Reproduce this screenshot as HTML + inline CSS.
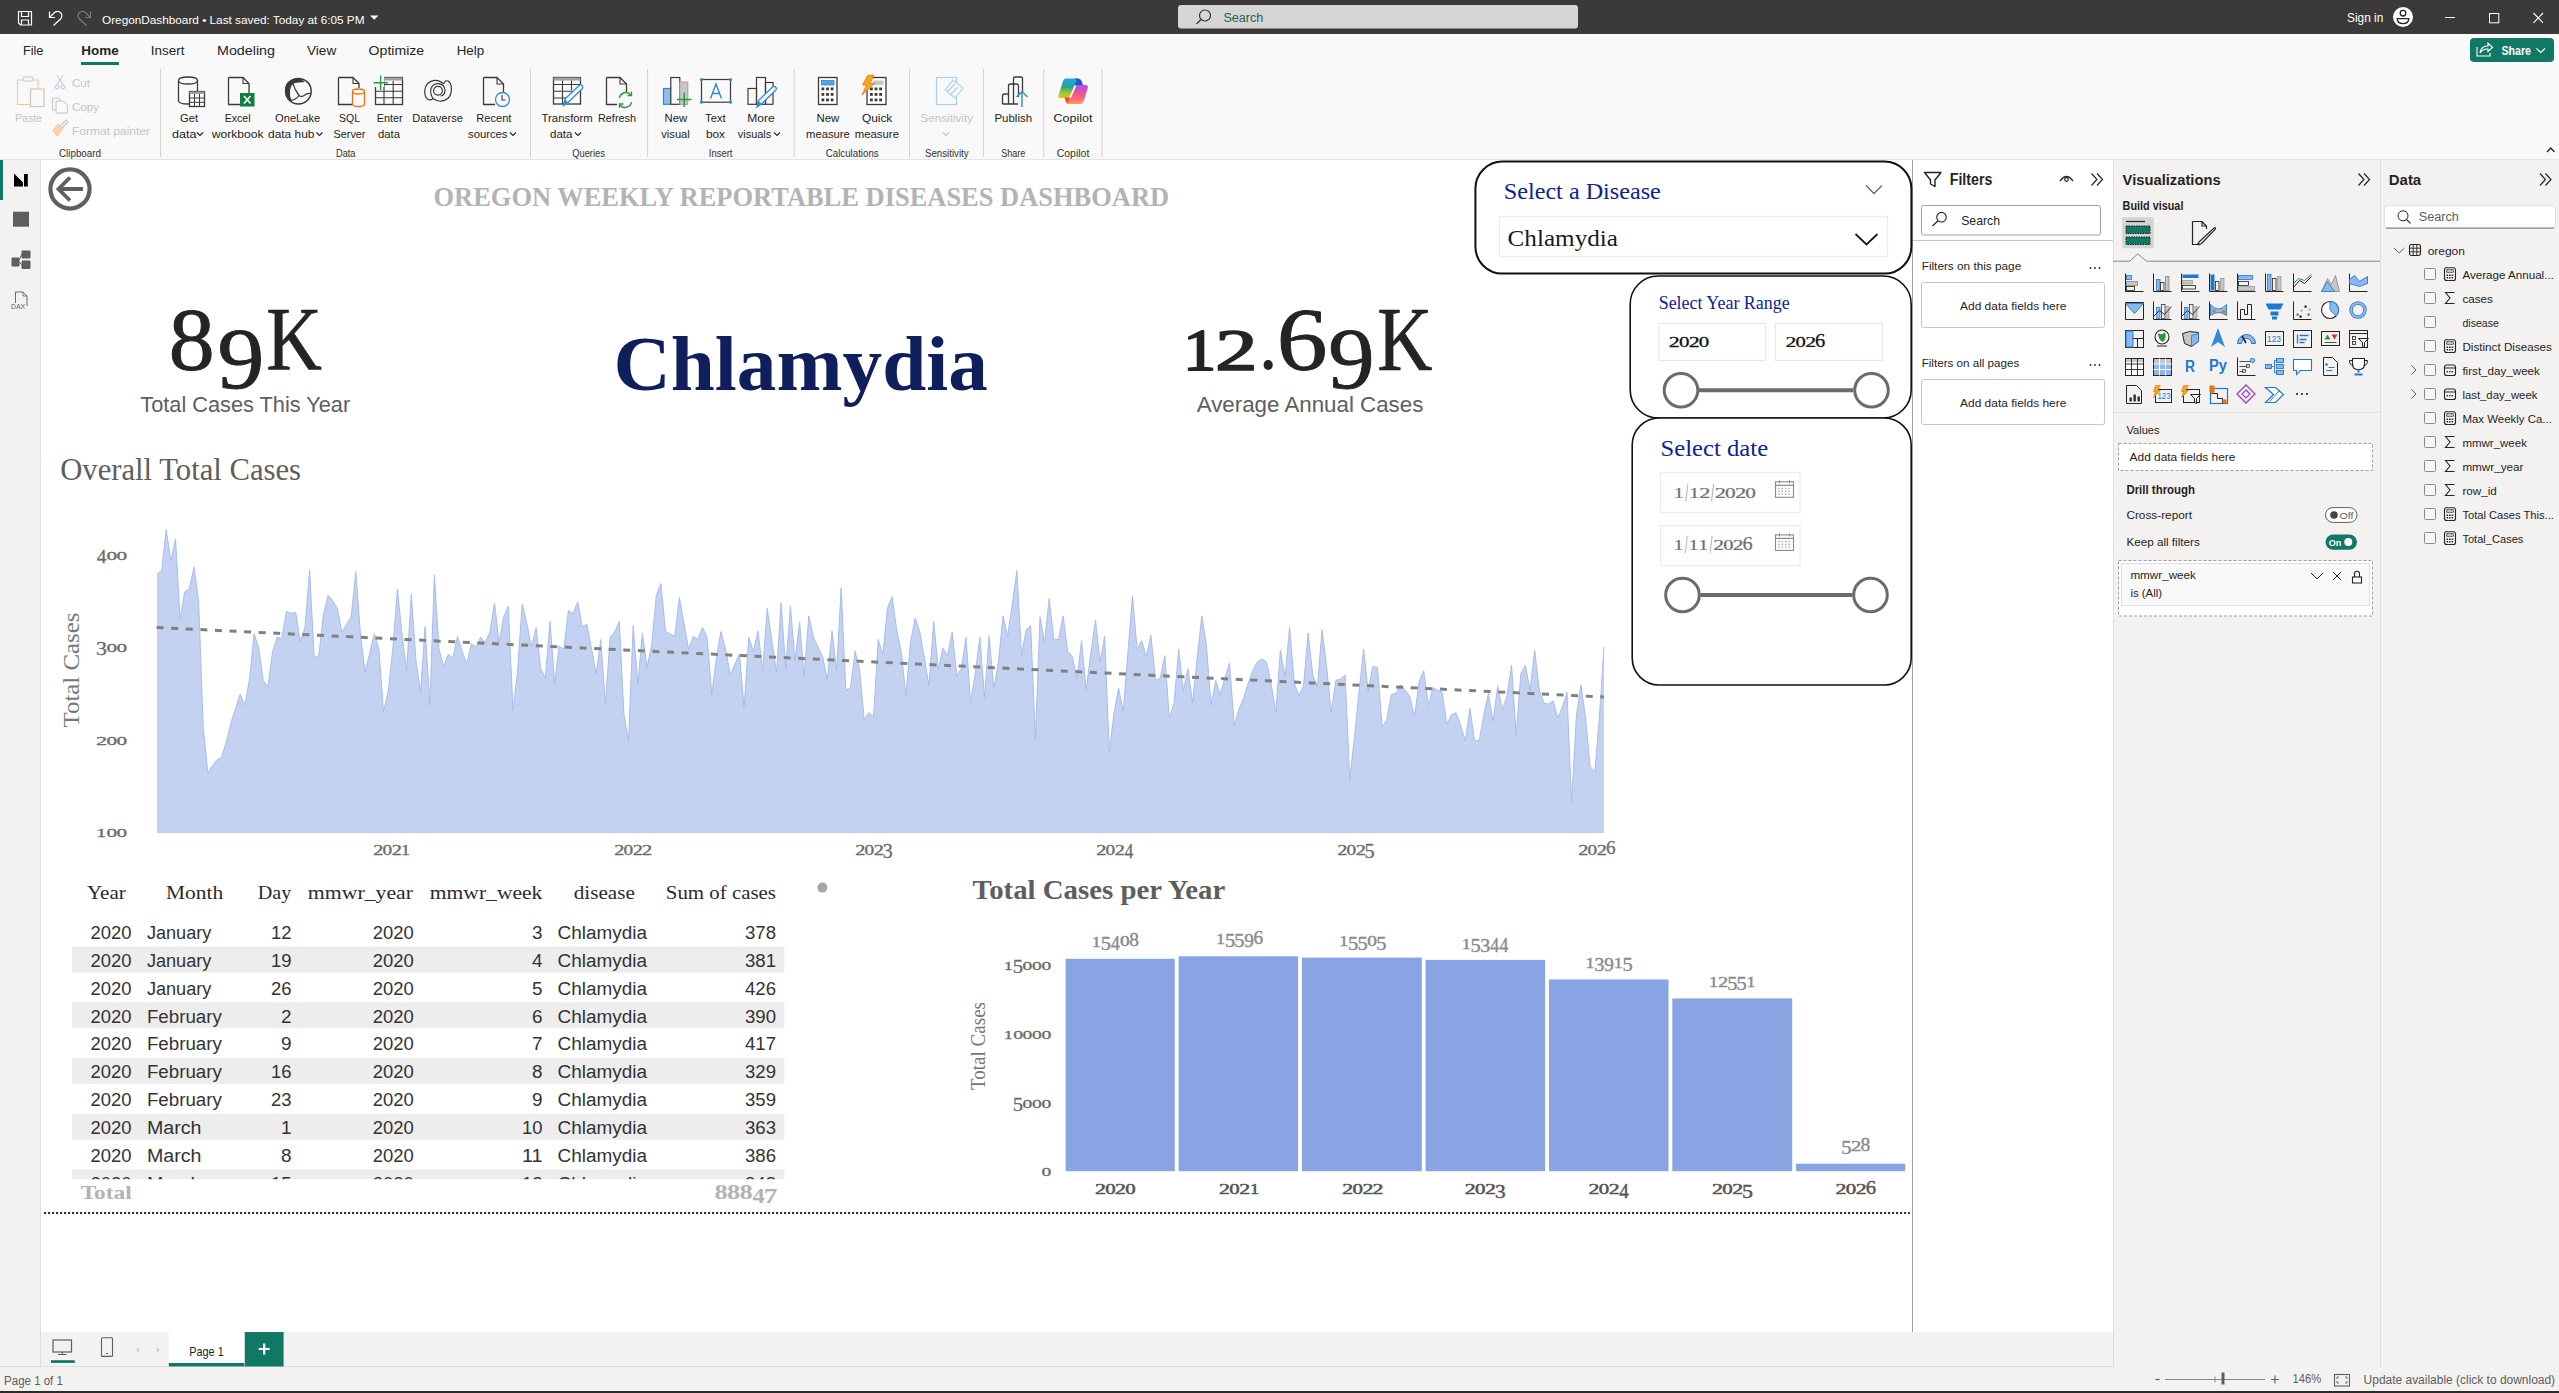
<!DOCTYPE html>
<html><head><meta charset="utf-8">
<style>
*{margin:0;padding:0}
html,body{width:2559px;height:1393px;overflow:hidden;background:#ffffff}
svg{display:block}
</style></head><body>
<svg width="2559" height="1393" viewBox="0 0 2559 1393" shape-rendering="geometricPrecision">
<rect x="0" y="0" width="2559" height="34" fill="#3b3a39"/>
<rect x="0" y="34" width="2559" height="126" fill="#f9f9f9"/>
<line x1="0" y1="159.5" x2="2559" y2="159.5" stroke="#e6e4e2" stroke-width="1"/>
<rect x="0" y="160" width="41" height="1207" fill="#f3f2f1"/>
<line x1="40.5" y1="160" x2="40.5" y2="1367" stroke="#e1dfdd" stroke-width="1"/>
<rect x="41" y="1332" width="2072" height="35" fill="#f3f2f1"/>
<rect x="0" y="1367" width="2559" height="24" fill="#f3f2f1"/>
<line x1="0" y1="1366.5" x2="2559" y2="1366.5" stroke="#e1dfdd" stroke-width="1"/>
<rect x="0" y="1391" width="2559" height="2" fill="#2b2b2b"/>
<path d="M18.5 11.5 H31.5 V25 H20.5 L18.5 23 Z" fill="none" stroke="#ffffff" stroke-width="1.2"/>
<path d="M21.5 11.5 V16.5 H28.5 V11.5" fill="none" stroke="#ffffff" stroke-width="1.2"/>
<path d="M21.5 25 V20 H28.5 V25" fill="none" stroke="#ffffff" stroke-width="1.2"/>
<path d="M49.5 11.5 V17.5 H55" fill="none" stroke="#ffffff" stroke-width="1.2"/>
<path d="M50 17 L54.5 12.5 Q58 10 61 13 Q63 16 60.5 19 L53.5 25.5" fill="none" stroke="#ffffff" stroke-width="1.2"/>
<path d="M90.5 11.5 V17.5 H85" fill="none" stroke="#7a7978" stroke-width="1.2"/>
<path d="M90 17 L85.5 12.5 Q82 10 79 13 Q77 16 79.5 19 L86.5 25.5" fill="none" stroke="#7a7978" stroke-width="1.2"/>
<text x="102.0" y="24.3" font-family='"Liberation Sans", sans-serif' font-size="11.6" fill="#ffffff" textLength="262.5" lengthAdjust="spacingAndGlyphs">OregonDashboard • Last saved: Today at 6:05 PM</text>
<path d="M370 15.5 L378.5 15.5 L374.25 19.8 Z" fill="#ffffff"/>
<rect x="1178" y="5" width="400" height="23.6" fill="#d6d6d6" rx="3"/>
<circle cx="1205" cy="15.5" r="5.5" fill="none" stroke="#323130" stroke-width="1.2"/>
<line x1="1201" y1="19.5" x2="1196.5" y2="24" stroke="#323130" stroke-width="1.3"/>
<text x="1223.4" y="21.8" font-family='"Liberation Sans", sans-serif' font-size="12.5" fill="#1e5f57" textLength="40.0" lengthAdjust="spacingAndGlyphs">Search</text>
<text x="2347.0" y="21.5" font-family='"Liberation Sans", sans-serif' font-size="12" fill="#ffffff" textLength="36.3" lengthAdjust="spacingAndGlyphs">Sign in</text>
<circle cx="2403" cy="17" r="10" fill="#ffffff"/>
<circle cx="2403" cy="13.2" r="2.8" fill="none" stroke="#252423" stroke-width="1.3"/>
<path d="M2397.2 18.6 H2408.8 Q2408.6 23.6 2403 23.6 Q2397.4 23.6 2397.2 18.6 Z" fill="none" stroke="#252423" stroke-width="1.3"/>
<line x1="2445" y1="17.5" x2="2455" y2="17.5" stroke="#ffffff" stroke-width="1"/>
<rect x="2489.5" y="13.5" width="9.3" height="9.3" fill="none" stroke="#ffffff" stroke-width="1"/>
<path d="M2533.5 13 L2543 22.8 M2543 13 L2533.5 22.8" fill="none" stroke="#ffffff" stroke-width="1.1"/>
<text x="23.0" y="55.0" font-family='"Liberation Sans", sans-serif' font-size="13.6" fill="#252423" textLength="20.4" lengthAdjust="spacingAndGlyphs">File</text>
<text x="81.3" y="55.0" font-family='"Liberation Sans", sans-serif' font-size="13.6" fill="#252423" font-weight="bold" textLength="37.5" lengthAdjust="spacingAndGlyphs">Home</text>
<text x="150.8" y="55.0" font-family='"Liberation Sans", sans-serif' font-size="13.6" fill="#252423" textLength="33.6" lengthAdjust="spacingAndGlyphs">Insert</text>
<text x="217.0" y="55.0" font-family='"Liberation Sans", sans-serif' font-size="13.6" fill="#252423" textLength="58.0" lengthAdjust="spacingAndGlyphs">Modeling</text>
<text x="307.0" y="55.0" font-family='"Liberation Sans", sans-serif' font-size="13.6" fill="#252423" textLength="29.2" lengthAdjust="spacingAndGlyphs">View</text>
<text x="368.6" y="55.0" font-family='"Liberation Sans", sans-serif' font-size="13.6" fill="#252423" textLength="55.6" lengthAdjust="spacingAndGlyphs">Optimize</text>
<text x="456.7" y="55.0" font-family='"Liberation Sans", sans-serif' font-size="13.6" fill="#252423" textLength="27.5" lengthAdjust="spacingAndGlyphs">Help</text>
<rect x="81" y="62" width="38" height="3" fill="#117865"/>
<rect x="2470" y="38" width="84" height="24" fill="#117865" rx="4"/>
<path d="M2477 47 V56 H2490 V53" fill="none" stroke="#ffffff" stroke-width="1.1"/>
<path d="M2480 53 Q2481 45.5 2488 46 V43 L2492.5 47.5 L2488 51.5 V49 Q2483 48.5 2480 53 Z" fill="none" stroke="#ffffff" stroke-width="1.1"/>
<text x="2501.4" y="54.6" font-family='"Liberation Sans", sans-serif' font-size="12.3" fill="#ffffff" font-weight="bold" textLength="29.6" lengthAdjust="spacingAndGlyphs">Share</text>
<path d="M2536.5 48.5 L2540.75 52.5 L2545 48.5" fill="none" stroke="#ffffff" stroke-width="1.1"/>
<path d="M2547 152 L2550.75 148 L2554.5 152" fill="none" stroke="#252423" stroke-width="1.3"/>
<line x1="160.6" y1="69" x2="160.6" y2="157" stroke="#d2d0ce" stroke-width="1"/>
<line x1="530.5" y1="69" x2="530.5" y2="157" stroke="#d2d0ce" stroke-width="1"/>
<line x1="647.6" y1="69" x2="647.6" y2="157" stroke="#d2d0ce" stroke-width="1"/>
<line x1="794.2" y1="69" x2="794.2" y2="157" stroke="#d2d0ce" stroke-width="1"/>
<line x1="909.5" y1="69" x2="909.5" y2="157" stroke="#d2d0ce" stroke-width="1"/>
<line x1="983.4" y1="69" x2="983.4" y2="157" stroke="#d2d0ce" stroke-width="1"/>
<line x1="1043.8" y1="69" x2="1043.8" y2="157" stroke="#d2d0ce" stroke-width="1"/>
<line x1="1102" y1="69" x2="1102" y2="157" stroke="#d2d0ce" stroke-width="1"/>
<text x="15.0" y="121.6" font-family='"Liberation Sans", sans-serif' font-size="11.6" fill="#c6c4c2" textLength="27.0" lengthAdjust="spacingAndGlyphs">Paste</text>
<text x="72.0" y="86.6" font-family='"Liberation Sans", sans-serif' font-size="11.6" fill="#c6c4c2" textLength="18.0" lengthAdjust="spacingAndGlyphs">Cut</text>
<text x="72.0" y="110.7" font-family='"Liberation Sans", sans-serif' font-size="11.6" fill="#c6c4c2" textLength="27.0" lengthAdjust="spacingAndGlyphs">Copy</text>
<text x="72.0" y="134.7" font-family='"Liberation Sans", sans-serif' font-size="11.6" fill="#c6c4c2" textLength="78.0" lengthAdjust="spacingAndGlyphs">Format painter</text>
<text x="180.0" y="121.8" font-family='"Liberation Sans", sans-serif' font-size="11.6" fill="#252423" textLength="18.0" lengthAdjust="spacingAndGlyphs">Get</text>
<text x="172.0" y="137.6" font-family='"Liberation Sans", sans-serif' font-size="11.6" fill="#252423" textLength="24.5" lengthAdjust="spacingAndGlyphs">data</text>
<text x="224.8" y="121.8" font-family='"Liberation Sans", sans-serif' font-size="11.6" fill="#252423" textLength="25.7" lengthAdjust="spacingAndGlyphs">Excel</text>
<text x="211.7" y="137.6" font-family='"Liberation Sans", sans-serif' font-size="11.6" fill="#252423" textLength="52.0" lengthAdjust="spacingAndGlyphs">workbook</text>
<text x="275.0" y="121.8" font-family='"Liberation Sans", sans-serif' font-size="11.6" fill="#252423" textLength="45.3" lengthAdjust="spacingAndGlyphs">OneLake</text>
<text x="268.0" y="137.6" font-family='"Liberation Sans", sans-serif' font-size="11.6" fill="#252423" textLength="46.5" lengthAdjust="spacingAndGlyphs">data hub</text>
<text x="339.0" y="121.8" font-family='"Liberation Sans", sans-serif' font-size="11.6" fill="#252423" textLength="21.0" lengthAdjust="spacingAndGlyphs">SQL</text>
<text x="333.5" y="137.6" font-family='"Liberation Sans", sans-serif' font-size="11.6" fill="#252423" textLength="32.0" lengthAdjust="spacingAndGlyphs">Server</text>
<text x="376.7" y="121.8" font-family='"Liberation Sans", sans-serif' font-size="11.6" fill="#252423" textLength="25.9" lengthAdjust="spacingAndGlyphs">Enter</text>
<text x="378.0" y="137.6" font-family='"Liberation Sans", sans-serif' font-size="11.6" fill="#252423" textLength="22.0" lengthAdjust="spacingAndGlyphs">data</text>
<text x="412.3" y="121.8" font-family='"Liberation Sans", sans-serif' font-size="11.6" fill="#252423" textLength="50.7" lengthAdjust="spacingAndGlyphs">Dataverse</text>
<text x="476.3" y="121.8" font-family='"Liberation Sans", sans-serif' font-size="11.6" fill="#252423" textLength="35.1" lengthAdjust="spacingAndGlyphs">Recent</text>
<text x="468.0" y="137.6" font-family='"Liberation Sans", sans-serif' font-size="11.6" fill="#252423" textLength="39.5" lengthAdjust="spacingAndGlyphs">sources</text>
<text x="541.6" y="121.8" font-family='"Liberation Sans", sans-serif' font-size="11.6" fill="#252423" textLength="51.2" lengthAdjust="spacingAndGlyphs">Transform</text>
<text x="550.0" y="137.6" font-family='"Liberation Sans", sans-serif' font-size="11.6" fill="#252423" textLength="22.5" lengthAdjust="spacingAndGlyphs">data</text>
<text x="598.0" y="121.8" font-family='"Liberation Sans", sans-serif' font-size="11.6" fill="#252423" textLength="38.0" lengthAdjust="spacingAndGlyphs">Refresh</text>
<text x="664.5" y="121.8" font-family='"Liberation Sans", sans-serif' font-size="11.6" fill="#252423" textLength="22.7" lengthAdjust="spacingAndGlyphs">New</text>
<text x="661.3" y="137.6" font-family='"Liberation Sans", sans-serif' font-size="11.6" fill="#252423" textLength="28.5" lengthAdjust="spacingAndGlyphs">visual</text>
<text x="705.0" y="121.8" font-family='"Liberation Sans", sans-serif' font-size="11.6" fill="#252423" textLength="20.7" lengthAdjust="spacingAndGlyphs">Text</text>
<text x="706.0" y="137.6" font-family='"Liberation Sans", sans-serif' font-size="11.6" fill="#252423" textLength="19.0" lengthAdjust="spacingAndGlyphs">box</text>
<text x="747.3" y="121.8" font-family='"Liberation Sans", sans-serif' font-size="11.6" fill="#252423" textLength="27.4" lengthAdjust="spacingAndGlyphs">More</text>
<text x="737.8" y="137.6" font-family='"Liberation Sans", sans-serif' font-size="11.6" fill="#252423" textLength="33.5" lengthAdjust="spacingAndGlyphs">visuals</text>
<text x="816.5" y="121.8" font-family='"Liberation Sans", sans-serif' font-size="11.6" fill="#252423" textLength="22.8" lengthAdjust="spacingAndGlyphs">New</text>
<text x="806.0" y="137.6" font-family='"Liberation Sans", sans-serif' font-size="11.6" fill="#252423" textLength="43.8" lengthAdjust="spacingAndGlyphs">measure</text>
<text x="862.0" y="121.8" font-family='"Liberation Sans", sans-serif' font-size="11.6" fill="#252423" textLength="30.3" lengthAdjust="spacingAndGlyphs">Quick</text>
<text x="854.7" y="137.6" font-family='"Liberation Sans", sans-serif' font-size="11.6" fill="#252423" textLength="44.3" lengthAdjust="spacingAndGlyphs">measure</text>
<text x="994.5" y="121.8" font-family='"Liberation Sans", sans-serif' font-size="11.6" fill="#252423" textLength="37.5" lengthAdjust="spacingAndGlyphs">Publish</text>
<text x="1053.6" y="121.8" font-family='"Liberation Sans", sans-serif' font-size="11.6" fill="#252423" textLength="38.8" lengthAdjust="spacingAndGlyphs">Copilot</text>
<text x="920.6" y="121.8" font-family='"Liberation Sans", sans-serif' font-size="11.6" fill="#c6c4c2" textLength="52.4" lengthAdjust="spacingAndGlyphs">Sensitivity</text>
<path d="M197 132.5 L200 135.5 L203 132.5" fill="none" stroke="#252423" stroke-width="1.1"/>
<path d="M316.5 132.5 L319.5 135.5 L322.5 132.5" fill="none" stroke="#252423" stroke-width="1.1"/>
<path d="M510 132.5 L513 135.5 L516 132.5" fill="none" stroke="#252423" stroke-width="1.1"/>
<path d="M575 132.5 L578 135.5 L581 132.5" fill="none" stroke="#252423" stroke-width="1.1"/>
<path d="M774 132.5 L777 135.5 L780 132.5" fill="none" stroke="#252423" stroke-width="1.1"/>
<path d="M943 132.5 L946 135.5 L949 132.5" fill="none" stroke="#c6c4c2" stroke-width="1.1"/>
<text x="59.0" y="156.5" font-family='"Liberation Sans", sans-serif' font-size="10.8" fill="#323130" textLength="42.0" lengthAdjust="spacingAndGlyphs">Clipboard</text>
<text x="336.0" y="156.5" font-family='"Liberation Sans", sans-serif' font-size="10.8" fill="#323130" textLength="19.4" lengthAdjust="spacingAndGlyphs">Data</text>
<text x="572.2" y="156.5" font-family='"Liberation Sans", sans-serif' font-size="10.8" fill="#323130" textLength="32.7" lengthAdjust="spacingAndGlyphs">Queries</text>
<text x="708.8" y="156.5" font-family='"Liberation Sans", sans-serif' font-size="10.8" fill="#323130" textLength="23.7" lengthAdjust="spacingAndGlyphs">Insert</text>
<text x="825.8" y="156.5" font-family='"Liberation Sans", sans-serif' font-size="10.8" fill="#323130" textLength="52.9" lengthAdjust="spacingAndGlyphs">Calculations</text>
<text x="925.0" y="156.5" font-family='"Liberation Sans", sans-serif' font-size="10.8" fill="#323130" textLength="43.6" lengthAdjust="spacingAndGlyphs">Sensitivity</text>
<text x="1001.3" y="156.5" font-family='"Liberation Sans", sans-serif' font-size="10.8" fill="#323130" textLength="24.0" lengthAdjust="spacingAndGlyphs">Share</text>
<text x="1056.7" y="156.5" font-family='"Liberation Sans", sans-serif' font-size="10.8" fill="#323130" textLength="32.6" lengthAdjust="spacingAndGlyphs">Copilot</text>
<path d="M17.5 80 H38 V104.5 H17.5 Z" fill="none" stroke="#f5c89a" stroke-width="1.2"/>
<rect x="23" y="77" width="10" height="4" fill="#f9f9f9" stroke="#c8c6c4" stroke-width="1" rx="1"/>
<rect x="30.5" y="89" width="13.5" height="17.5" fill="#f9f9f9" stroke="#c8c6c4" stroke-width="1.2"/>
<path d="M57 75 L63 85 M63 75 L57 85" fill="none" stroke="#c8c6c4" stroke-width="1"/>
<circle cx="57" cy="87" r="2" fill="none" stroke="#a9c9ea" stroke-width="1"/>
<circle cx="63" cy="87" r="2" fill="none" stroke="#a9c9ea" stroke-width="1"/>
<path d="M52.5 98 H59 L60 100 V110 H52.5 Z" fill="none" stroke="#c8c6c4" stroke-width="1"/>
<path d="M56 101 H63 L67.5 105 V113 H56 Z" fill="#f9f9f9" stroke="#c8c6c4" stroke-width="1"/>
<path d="M53 131 L58 124 L63 129 L57 136 Z" fill="#f8d3ad" stroke="#f5c89a" stroke-width="1"/>
<path d="M60 126 L66 120 L68 122 L62 128" fill="none" stroke="#c8c6c4" stroke-width="1.2"/>
<path d="M178.5 80.5 V100.5 Q178.5 104 188 104 Q190 104 189.5 104" fill="none" stroke="#3b3a39" stroke-width="1.3"/>
<path d="M178.5 80.5 Q178.5 77 188 77 Q197.5 77 197.5 80.5 V91" fill="none" stroke="#3b3a39" stroke-width="1.3"/>
<path d="M178.5 80.5 Q178.5 84 188 84 Q197.5 84 197.5 80.5" fill="none" stroke="#3b3a39" stroke-width="1.3"/>
<rect x="189.5" y="91.5" width="15" height="15" fill="#f9f9f9" stroke="#3b3a39" stroke-width="1.3"/>
<rect x="189.5" y="91.5" width="15" height="2.5" fill="#a19f9d"/>
<path d="M189.5 98 H204.5 M189.5 102.3 H204.5 M194.5 94 V106.5 M199.5 94 V106.5" fill="none" stroke="#3b3a39" stroke-width="1"/>
<path d="M228.5 77.5 H243 L249 83.5 V93 M240 104.5 H228.5 V77.5" fill="none" stroke="#3b3a39" stroke-width="1.3"/>
<path d="M243 77.5 V83.5 H249" fill="none" stroke="#3b3a39" stroke-width="1.1"/>
<rect x="240" y="93" width="14.5" height="13.5" fill="#107c41"/>
<path d="M244 96 L250.5 103.5 M250.5 96 L244 103.5" fill="none" stroke="#ffffff" stroke-width="1.6"/>
<circle cx="298.4" cy="91.2" r="12.8" fill="none" stroke="#3b3a39" stroke-width="1.5"/>
<path d="M297 78.4 Q290.5 78.6 287 83 Q284.3 87 285.4 93.5 Q286.5 99 291.5 100.5 Q289.5 96 290 91 Q290.6 86 293 84 Q296 81.8 304.5 82.2 Q302.5 78.4 297 78.4 Z" fill="#3b3a39"/>
<path d="M292.5 82.6 Q295 90 299 95.5 Q301.5 97.5 304 95.5 Q307 93 311 93.5" fill="none" stroke="#3b3a39" stroke-width="1.3"/>
<path d="M290 100.5 Q296 100 299 95.5" fill="none" stroke="#3b3a39" stroke-width="1.3"/>
<path d="M338.5 77.5 H353 L359 83.5 V88 M352 104.5 H338.5 V77.5" fill="none" stroke="#3b3a39" stroke-width="1.3"/>
<path d="M353 77.5 V83.5 H359" fill="none" stroke="#3b3a39" stroke-width="1.1"/>
<path d="M352.5 91.5 V104 Q352.5 106.5 358.5 106.5 Q364.5 106.5 364.5 104 V91.5" fill="#f9f9f9" stroke="#e8730c" stroke-width="1.3"/>
<ellipse cx="358.5" cy="91.5" rx="6" ry="2.5" fill="#f9f9f9" stroke="#e8730c" stroke-width="1.3"/>
<rect x="375.5" y="77.5" width="27" height="27" fill="none" stroke="#3b3a39" stroke-width="1.3"/>
<rect x="384" y="77.5" width="18.5" height="3" fill="#a19f9d"/>
<path d="M375.5 84.5 H402.5 M375.5 91.2 H402.5 M375.5 97.8 H402.5 M384 81 V104.5 M393.2 81 V104.5" fill="none" stroke="#3b3a39" stroke-width="1.1"/>
<rect x="372" y="75" width="12" height="12" fill="#f9f9f9"/>
<path d="M380.6 75.5 V90 M373.5 82.7 H388" fill="none" stroke="#2a9a3d" stroke-width="1.4"/>
<circle cx="438" cy="90.8" r="4.4" fill="none" stroke="#3b3a39" stroke-width="1.2"/>
<path d="M443.5 84 Q440 80 434.5 80.3 Q426 81.5 424.8 90 Q424.2 97 428 99.5 Q431 100.8 433 98.5" fill="none" stroke="#3b3a39" stroke-width="1.2"/>
<path d="M433 98.5 Q429.5 93 431.2 88 Q433.5 83.3 438.5 83.6 Q444.5 84.5 445 90 Q445 95.5 440.5 96" fill="none" stroke="#3b3a39" stroke-width="1.2"/>
<path d="M433 98.5 Q437 101.5 441 101.2 Q449 100.5 451 93 Q452.5 84.5 448.5 81.2 Q445.5 79.5 443.5 84" fill="none" stroke="#3b3a39" stroke-width="1.2"/>
<path d="M483.5 77.5 H497 L503.5 84 V92 M495 104.5 H483.5 V77.5" fill="none" stroke="#3b3a39" stroke-width="1.3"/>
<path d="M497 77.5 V84 H503.5" fill="none" stroke="#3b3a39" stroke-width="1.1"/>
<circle cx="502.5" cy="99.5" r="7" fill="#f9f9f9" stroke="#2f8ad8" stroke-width="1.3"/>
<path d="M502 95 V100 H505.5" fill="none" stroke="#3b3a39" stroke-width="1.1"/>
<rect x="553.5" y="77.5" width="27" height="26.5" fill="none" stroke="#3b3a39" stroke-width="1.3"/>
<rect x="553.5" y="77.5" width="27" height="3" fill="#a19f9d"/>
<path d="M553.5 84.5 H580.5 M553.5 91.3 H580.5 M553.5 98 H570 M562.5 80.5 V104 M571.5 80.5 V90" fill="none" stroke="#3b3a39" stroke-width="1.1"/>
<path d="M563.5 105.5 L565 99 L579 85.5 Q581 84 582.5 86 Q583.5 87.5 582 89 L568 102.5 Z" fill="#f9f9f9" stroke="#2f8ad8" stroke-width="1.3"/>
<path d="M563.5 105.5 L565 99 L568 102.5 Z" fill="#2f8ad8"/>
<path d="M606.5 77.5 H620 L626.5 84 V92 M617 104.5 H606.5 V77.5" fill="none" stroke="#3b3a39" stroke-width="1.3"/>
<path d="M620 77.5 V84 H626.5" fill="none" stroke="#3b3a39" stroke-width="1.1"/>
<path d="M619.5 98 A6.5 6.5 0 0 1 631 95 M631.5 102 A6.5 6.5 0 0 1 620 105" fill="none" stroke="#2a9a3d" stroke-width="1.5"/>
<path d="M631.5 91.5 V95.5 H627.5 M619.5 108 V104 H623.5" fill="none" stroke="#2a9a3d" stroke-width="1.3"/>
<rect x="663.5" y="88.5" width="7.3" height="15.8" fill="#8cbcf0" stroke="#2f8ad8" stroke-width="1.2"/>
<rect x="670.8" y="77.5" width="9" height="26.8" fill="#f9f9f9" stroke="#3b3a39" stroke-width="1.2"/>
<rect x="679.8" y="82" width="8" height="22.3" fill="#c8c6c4" stroke="#a19f9d" stroke-width="1"/>
<path d="M684.2 92.5 V107 M677 99.5 H691.5" fill="none" stroke="#2a9a3d" stroke-width="1.5"/>
<rect x="701.5" y="79.5" width="29" height="22.7" fill="none" stroke="#3b3a39" stroke-width="1.2"/>
<circle cx="701.5" cy="79.5" r="1.6" fill="#2f8ad8"/>
<circle cx="730.5" cy="79.5" r="1.6" fill="#2f8ad8"/>
<circle cx="701.5" cy="102.2" r="1.6" fill="#2f8ad8"/>
<circle cx="730.5" cy="102.2" r="1.6" fill="#2f8ad8"/>
<path d="M710.5 98.5 L716 84 L721.5 98.5 M712.5 93.5 H719.5" fill="none" stroke="#2f8ad8" stroke-width="1.4"/>
<rect x="748" y="88.5" width="8.5" height="15.8" fill="none" stroke="#3b3a39" stroke-width="1.2"/>
<rect x="756.5" y="77.5" width="9" height="26.8" fill="none" stroke="#3b3a39" stroke-width="1.2"/>
<rect x="765.5" y="82.5" width="7.5" height="21.8" fill="none" stroke="#3b3a39" stroke-width="1.2"/>
<path d="M757 107 L758.5 100.5 L772.5 87 Q774.5 85.5 776 87.5 Q777 89 775.5 90.5 L761.5 104 Z" fill="#f9f9f9" stroke="#2f8ad8" stroke-width="1.3"/>
<path d="M757 107 L758.5 100.5 L761.5 104 Z" fill="#2f8ad8"/>
<rect x="818.5" y="77.5" width="18.5" height="27" fill="#ffffff" stroke="#3b3a39" stroke-width="1.3"/>
<rect x="821.5" y="80.5" width="12.5" height="4.5" fill="#5aa0e6" stroke="#2f8ad8" stroke-width="0.8"/>
<rect x="821.5" y="87.5" width="2.8" height="2.8" fill="#3b3a39"/>
<rect x="826.1" y="87.5" width="2.8" height="2.8" fill="#3b3a39"/>
<rect x="830.7" y="87.5" width="2.8" height="2.8" fill="#3b3a39"/>
<rect x="821.5" y="93.0" width="2.8" height="2.8" fill="#3b3a39"/>
<rect x="826.1" y="93.0" width="2.8" height="2.8" fill="#3b3a39"/>
<rect x="830.7" y="93.0" width="2.8" height="2.8" fill="#3b3a39"/>
<rect x="821.5" y="98.5" width="2.8" height="2.8" fill="#3b3a39"/>
<rect x="826.1" y="98.5" width="2.8" height="2.8" fill="#3b3a39"/>
<rect x="830.7" y="98.5" width="2.8" height="2.8" fill="#3b3a39"/>
<rect x="867" y="77.5" width="19" height="27" fill="#ffffff" stroke="#3b3a39" stroke-width="1.3"/>
<rect x="873" y="80.5" width="10.5" height="4.5" fill="#c8c6c4"/>
<rect x="870.0" y="87.5" width="2.8" height="2.8" fill="#3b3a39"/>
<rect x="874.6" y="87.5" width="2.8" height="2.8" fill="#3b3a39"/>
<rect x="879.2" y="87.5" width="2.8" height="2.8" fill="#3b3a39"/>
<rect x="870.0" y="93.0" width="2.8" height="2.8" fill="#3b3a39"/>
<rect x="874.6" y="93.0" width="2.8" height="2.8" fill="#3b3a39"/>
<rect x="879.2" y="93.0" width="2.8" height="2.8" fill="#3b3a39"/>
<rect x="870.0" y="98.5" width="2.8" height="2.8" fill="#3b3a39"/>
<rect x="874.6" y="98.5" width="2.8" height="2.8" fill="#3b3a39"/>
<rect x="879.2" y="98.5" width="2.8" height="2.8" fill="#3b3a39"/>
<path d="M868 75.2 H874 L870 83.5 H874.5 L862 95 L866.5 85 H862.5 Z" fill="#f7a823" stroke="#e8730c" stroke-width="0.8"/>
<rect x="936.5" y="77.5" width="20" height="27" fill="none" stroke="#a9d0ee" stroke-width="1.2"/>
<path d="M945 90 L953 80 L963 88 L955 98 Z" fill="#f9f9f9" stroke="#a9d0ee" stroke-width="1.2"/>
<path d="M947 92 L955 84 M950 95 L958 87" fill="none" stroke="#a9d0ee" stroke-width="1.2"/>
<path d="M1002.5 104 V96 Q1002.5 94 1004.5 94 H1008.5 V86 Q1008.5 84 1010.5 84 H1013.5 V78 Q1013.5 77 1015 77 H1021 Q1022.5 77 1022.5 78 V92" fill="none" stroke="#3b3a39" stroke-width="1.3"/>
<path d="M1002.5 104 H1018 M1008.5 94 V104 M1013.5 84 V104 M1013.5 84 H1017 Q1018.5 84 1018.5 86 V97" fill="none" stroke="#3b3a39" stroke-width="1.3"/>
<path d="M1022 107 V92 M1016.5 97 L1022 91.5 L1027.5 97" fill="none" stroke="#2f8ad8" stroke-width="1.4"/>
<defs><linearGradient id="cpA" x1="0" y1="0" x2="0" y2="1"><stop offset="0" stop-color="#1ea7f0"/><stop offset="0.45" stop-color="#2aa58a"/><stop offset="0.7" stop-color="#8cc63f"/><stop offset="1" stop-color="#f5c400"/></linearGradient><linearGradient id="cpB" x1="0" y1="0" x2="0" y2="1"><stop offset="0" stop-color="#b14ef0"/><stop offset="0.4" stop-color="#e9509b"/><stop offset="0.7" stop-color="#ff6577"/><stop offset="1" stop-color="#ff9d5a"/></linearGradient></defs>
<path d="M1065.5 78.5 H1077.5 Q1080.5 78.5 1081.5 81 L1083 85.5 H1074.5 L1070 96.5 Q1069.5 98 1067.5 98 H1060.5 Q1057.8 98 1058.5 95.5 L1063 81 Q1063.8 78.5 1065.5 78.5 Z" fill="url(#cpA)"/>
<path d="M1075 78.5 H1077.5 Q1080.5 78.5 1081.5 81 L1083 85.5 H1074.5 L1076.5 80.5 Z" fill="#1f47d6" opacity="0.85"/>
<path d="M1076 85 H1085.5 Q1088.5 85 1087.8 88 L1083.5 101.5 Q1082.8 104 1080 104 H1068.5 Q1066.5 104 1065.8 101.8 L1064.5 97.5 H1069.8 L1074.5 86.5 Q1075 85 1076 85 Z" fill="url(#cpB)"/>
<path d="M1064.5 97.5 H1070 L1068.8 100.5 Q1068 104 1066.5 103 Z" fill="#f0502a" opacity="0.9"/>
<line x1="1075.5" y1="85.5" x2="1070" y2="98" stroke="#ffffff" stroke-width="1.6"/>
<rect x="0" y="160" width="3" height="40" fill="#117865"/>
<path d="M14 173.5 L23 182.5 V186.5 H14 Z" fill="#000000"/>
<rect x="24" y="174" width="3.8" height="12.5" fill="#000000"/>
<rect x="13" y="211.7" width="16" height="15" fill="#605e5c"/>
<path d="M12 258 H19 V266 H12 Z M22 251 H30 V258 H22 Z M22 261 H30 V268.5 H22 Z M19 260 L22 254 M19 262 L22 265" fill="#605e5c" stroke="#605e5c" stroke-width="1"/>
<path d="M15.5 303 V292 H23 L27 296 V306" fill="none" stroke="#605e5c" stroke-width="0.9"/>
<path d="M23 292 V296 H27" fill="none" stroke="#605e5c" stroke-width="0.8"/>
<text x="11.0" y="308.5" font-family='"Liberation Sans", sans-serif' font-size="6.5" fill="#605e5c" textLength="14.0" lengthAdjust="spacingAndGlyphs">DAX</text>
<rect x="53" y="1340" width="18.5" height="12" fill="none" stroke="#605e5c" stroke-width="1.2"/>
<path d="M62.3 1352 V1354.5 M58 1354.5 H66.5" fill="none" stroke="#605e5c" stroke-width="1.2"/>
<rect x="51" y="1360.2" width="23.8" height="2.7" fill="#117865"/>
<rect x="101.5" y="1337.8" width="11" height="18.6" fill="none" stroke="#605e5c" stroke-width="1.1" rx="1"/>
<line x1="106" y1="1353.5" x2="108" y2="1353.5" stroke="#605e5c" stroke-width="1"/>
<path d="M139 1347 L135.5 1350 L139 1353 Z" fill="#d2d0ce"/>
<path d="M156.5 1347 L160 1350 L156.5 1353 Z" fill="#d2d0ce"/>
<rect x="168.8" y="1332" width="75.5" height="34.5" fill="#ffffff"/>
<rect x="168.8" y="1363" width="75.5" height="3.5" fill="#117865"/>
<text x="189.3" y="1355.5" font-family='"Liberation Sans", sans-serif' font-size="12.4" fill="#252423" textLength="34.4" lengthAdjust="spacingAndGlyphs">Page 1</text>
<rect x="244.8" y="1332" width="38.8" height="34.5" fill="#117865"/>
<path d="M264.2 1343.5 V1354.5 M258.7 1349 H269.7" fill="none" stroke="#ffffff" stroke-width="2.2"/>
<text x="4.1" y="1384.8" font-family='"Liberation Sans", sans-serif' font-size="12" fill="#605e5c" textLength="58.8" lengthAdjust="spacingAndGlyphs">Page 1 of 1</text>
<line x1="2155.5" y1="1379.5" x2="2159.5" y2="1379.5" stroke="#605e5c" stroke-width="1.2"/>
<line x1="2165" y1="1379.5" x2="2265" y2="1379.5" stroke="#8a8886" stroke-width="1"/>
<line x1="2215" y1="1376.5" x2="2215" y2="1382.5" stroke="#8a8886" stroke-width="1"/>
<rect x="2221.5" y="1372.5" width="3" height="12" fill="#605e5c"/>
<path d="M2271 1379.5 H2279 M2275 1375.5 V1383.5" fill="none" stroke="#605e5c" stroke-width="1.1"/>
<text x="2292.5" y="1383.4" font-family='"Liberation Sans", sans-serif' font-size="12" fill="#605e5c" textLength="28.7" lengthAdjust="spacingAndGlyphs">146%</text>
<rect x="2334.5" y="1374.5" width="15" height="11.5" fill="none" stroke="#605e5c" stroke-width="1.1"/>
<path d="M2337 1377 V1379 M2337 1377 H2339 M2347 1377 H2345 M2347 1377 V1379 M2337 1383 V1381 M2337 1383 H2339 M2347 1383 H2345 M2347 1383 V1381" fill="none" stroke="#605e5c" stroke-width="0.9"/>
<text x="2363.6" y="1383.5" font-family='"Liberation Sans", sans-serif' font-size="12" fill="#605e5c" textLength="191.5" lengthAdjust="spacingAndGlyphs">Update available (click to download)</text>
<line x1="1912.5" y1="160" x2="1912.5" y2="1332" stroke="#a19f9d" stroke-width="1"/>
<circle cx="70" cy="189" r="19.6" fill="none" stroke="#5f5f5f" stroke-width="4.2"/>
<path d="M83 189 H58.5 M70 177.5 L58.5 189 L70 200.5" fill="none" stroke="#5f5f5f" stroke-width="3.8"/>
<text transform="translate(433.54 205.90) scale(0.9629 1)" font-family='"Liberation Serif", serif' font-size="27.48" fill="#b3b3b3" font-weight="bold">OREGON WEEKLY REPORTABLE DISEASES DASHBOARD</text>
<text transform="translate(168.71 369.17) scale(1.0393 1)" font-family='"Liberation Serif", serif' font-size="88.30" fill="#252423" stroke="#252423" stroke-width="0.9" stroke-linejoin="round">8</text>
<text transform="translate(217.41 388.38) scale(1.0701 1)" font-family='"Liberation Serif", serif' font-size="87.43" fill="#252423" stroke="#252423" stroke-width="0.9" stroke-linejoin="round">9</text>
<text transform="translate(266.13 370.15) scale(0.8443 1)" font-family='"Liberation Serif", serif' font-size="91.30" fill="#252423" stroke="#252423" stroke-width="0.7" stroke-linejoin="round">K</text>
<text transform="translate(140.31 411.80) scale(0.9658 1)" font-family='"Liberation Sans", sans-serif' font-size="22.53" fill="#605e5c">Total Cases This Year</text>
<text transform="translate(613.43 389.50) scale(1.0085 1)" font-family='"Liberation Serif", serif' font-size="78.63" fill="#0f1f5c" font-weight="bold">Chlamydia</text>
<text transform="translate(1183.09 369.60) scale(1.1321 1)" font-family='"Liberation Serif", serif' font-size="58.64" fill="#252423" stroke="#252423" stroke-width="1.8" stroke-linejoin="round">1</text>
<text transform="translate(1215.37 369.65) scale(1.4381 1)" font-family='"Liberation Serif", serif' font-size="58.57" fill="#252423" stroke="#252423" stroke-width="1.7" stroke-linejoin="round">2</text>
<text transform="translate(1258.46 369.22) scale(0.9106 1)" font-family='"Liberation Serif", serif' font-size="85.11" fill="#252423">.</text>
<text transform="translate(1276.64 369.16) scale(1.1417 1)" font-family='"Liberation Serif", serif' font-size="88.92" fill="#252423" stroke="#252423" stroke-width="0.9" stroke-linejoin="round">6</text>
<text transform="translate(1328.24 387.98) scale(1.0667 1)" font-family='"Liberation Serif", serif' font-size="86.84" fill="#252423" stroke="#252423" stroke-width="0.9" stroke-linejoin="round">9</text>
<text transform="translate(1377.25 370.15) scale(0.8363 1)" font-family='"Liberation Serif", serif' font-size="91.30" fill="#252423" stroke="#252423" stroke-width="0.7" stroke-linejoin="round">K</text>
<text transform="translate(1196.74 411.50) scale(1.0040 1)" font-family='"Liberation Sans", sans-serif' font-size="22.24" fill="#605e5c">Average Annual Cases</text>
<text transform="translate(60.17 480.00) scale(1.0047 1)" font-family='"Liberation Serif", serif' font-size="30.53" fill="#605e5c">Overall Total Cases</text>
<polygon points="157.0,833 157.0,573.8 161.6,571.2 166.2,529.7 170.9,560.9 175.5,539.0 180.1,619.0 184.7,592.1 189.4,588.5 194.0,567.0 198.6,600.7 203.2,726.7 207.9,773.0 212.5,765.4 217.1,760.0 221.7,756.8 226.3,741.7 231.0,722.4 235.6,708.4 240.2,694.0 244.8,705.1 249.5,679.3 254.1,633.7 258.7,648.1 263.3,680.4 268.0,686.8 272.6,651.3 277.2,637.3 281.8,638.4 286.4,611.5 291.1,613.2 295.7,612.6 300.3,641.6 304.9,627.6 309.6,570.0 314.2,657.8 318.8,655.6 323.4,614.7 328.1,595.3 332.7,600.7 337.3,608.3 341.9,632.0 346.5,624.4 351.2,616.9 355.8,571.7 360.4,634.1 365.0,671.8 369.7,653.5 374.3,633.7 378.9,649.2 383.5,711.6 388.1,692.2 392.8,649.2 397.4,588.9 402.0,634.1 406.6,670.7 411.3,594.3 415.9,660.0 420.5,692.2 425.1,626.6 429.8,705.1 434.4,574.9 439.0,649.2 443.6,666.4 448.2,654.6 452.9,657.8 457.5,636.3 462.1,651.3 466.7,664.2 471.4,643.8 476.0,647.0 480.6,637.3 485.2,642.7 489.9,632.0 494.5,602.9 499.1,642.7 503.7,616.9 508.3,606.1 513.0,710.5 517.6,670.7 522.2,604.0 526.8,623.3 531.5,647.0 536.1,627.6 540.7,668.5 545.3,678.2 550.0,621.2 554.6,683.6 559.2,646.0 563.8,649.2 568.4,610.4 573.1,613.6 577.7,601.8 582.3,626.6 586.9,624.4 591.6,649.2 596.2,673.9 600.8,639.5 605.4,704.1 610.1,637.3 614.7,632.0 619.3,621.2 623.9,713.8 628.5,741.7 633.2,625.5 637.8,684.7 642.4,633.0 647.0,667.5 651.7,644.9 656.3,595.3 660.9,583.5 665.5,630.9 670.2,634.1 674.8,636.3 679.4,597.5 684.0,623.3 688.6,649.2 693.3,636.3 697.9,639.5 702.5,627.6 707.1,637.3 711.8,694.4 716.4,657.8 721.0,631.5 725.6,649.2 730.3,675.0 734.9,664.2 739.5,653.5 744.1,708.4 748.7,637.3 753.4,651.3 758.0,630.9 762.6,670.7 767.2,608.3 771.9,640.6 776.5,672.9 781.1,602.9 785.7,668.5 790.4,606.1 795.0,661.0 799.6,622.3 804.2,677.2 808.8,615.8 813.5,637.3 818.1,647.0 822.7,656.7 827.3,680.4 832.0,630.9 836.6,670.7 841.2,587.8 845.8,690.1 850.5,687.9 855.1,651.3 859.7,670.7 864.3,720.2 868.9,712.7 873.6,717.0 878.2,639.5 882.8,654.6 887.4,608.3 892.1,596.4 896.7,629.8 901.3,652.4 905.9,695.5 910.5,642.7 915.2,618.0 919.8,632.0 924.4,657.8 929.0,685.8 933.7,621.2 938.3,669.6 942.9,648.1 947.5,655.6 952.2,632.0 956.8,676.1 961.4,668.5 966.0,637.3 970.6,703.0 975.3,672.9 979.9,637.3 984.5,697.6 989.1,636.3 993.8,689.0 998.4,662.1 1003.0,615.8 1007.6,636.3 1012.3,604.0 1016.9,570.6 1021.5,655.6 1026.1,629.8 1030.7,625.5 1035.4,739.6 1040.0,616.9 1044.6,642.7 1049.2,598.6 1053.9,639.5 1058.5,639.5 1063.1,615.8 1067.7,651.3 1072.4,656.7 1077.0,679.3 1081.6,640.6 1086.2,690.1 1090.8,653.5 1095.5,620.1 1100.1,662.1 1104.7,636.3 1109.3,752.5 1114.0,712.7 1118.6,687.9 1123.2,711.6 1127.8,653.5 1132.5,596.4 1137.1,649.2 1141.7,640.6 1146.3,656.7 1150.9,635.2 1155.6,680.4 1160.2,678.2 1164.8,655.6 1169.4,718.1 1174.1,703.0 1178.7,649.2 1183.3,691.2 1187.9,668.5 1192.6,703.0 1197.2,657.8 1201.8,615.8 1206.4,644.9 1211.0,705.1 1215.7,680.4 1220.3,694.4 1224.9,678.2 1229.5,663.2 1234.2,725.6 1238.8,709.5 1243.4,698.7 1248.0,683.6 1252.7,670.7 1257.3,662.1 1261.9,658.9 1266.5,662.1 1271.1,683.6 1275.8,712.7 1280.4,650.2 1285.0,677.2 1289.6,627.6 1294.3,683.6 1298.9,695.5 1303.5,685.8 1308.1,633.0 1312.8,675.0 1317.4,686.8 1322.0,629.8 1326.6,666.4 1331.2,712.7 1335.9,680.4 1340.5,679.3 1345.1,675.0 1349.7,779.4 1354.4,737.4 1359.0,692.2 1363.6,649.2 1368.2,691.2 1372.8,666.4 1377.5,667.5 1382.1,726.7 1386.7,720.2 1391.3,694.4 1396.0,693.3 1400.6,684.7 1405.2,690.1 1409.8,696.5 1414.5,717.0 1419.1,681.5 1423.7,670.7 1428.3,705.1 1432.9,687.9 1437.6,690.1 1442.2,692.2 1446.8,724.5 1451.4,714.8 1456.1,712.7 1460.7,725.6 1465.3,740.7 1469.9,708.4 1474.6,740.7 1479.2,740.7 1483.8,714.8 1488.4,693.3 1493.0,721.3 1497.7,685.8 1502.3,709.5 1506.9,696.5 1511.5,665.3 1516.2,735.3 1520.8,673.9 1525.4,665.3 1530.0,690.1 1534.7,650.2 1539.3,690.1 1543.9,703.0 1548.5,704.1 1553.1,700.8 1557.8,718.1 1562.4,707.3 1567.0,692.2 1571.6,803.1 1576.3,717.0 1580.9,684.7 1585.5,717.0 1590.1,766.5 1594.8,771.9 1599.4,717.0 1604.0,647.0 1604.0,833" fill="#c4d2f1"/>
<polyline points="157.0,573.8 161.6,571.2 166.2,529.7 170.9,560.9 175.5,539.0 180.1,619.0 184.7,592.1 189.4,588.5 194.0,567.0 198.6,600.7 203.2,726.7 207.9,773.0 212.5,765.4 217.1,760.0 221.7,756.8 226.3,741.7 231.0,722.4 235.6,708.4 240.2,694.0 244.8,705.1 249.5,679.3 254.1,633.7 258.7,648.1 263.3,680.4 268.0,686.8 272.6,651.3 277.2,637.3 281.8,638.4 286.4,611.5 291.1,613.2 295.7,612.6 300.3,641.6 304.9,627.6 309.6,570.0 314.2,657.8 318.8,655.6 323.4,614.7 328.1,595.3 332.7,600.7 337.3,608.3 341.9,632.0 346.5,624.4 351.2,616.9 355.8,571.7 360.4,634.1 365.0,671.8 369.7,653.5 374.3,633.7 378.9,649.2 383.5,711.6 388.1,692.2 392.8,649.2 397.4,588.9 402.0,634.1 406.6,670.7 411.3,594.3 415.9,660.0 420.5,692.2 425.1,626.6 429.8,705.1 434.4,574.9 439.0,649.2 443.6,666.4 448.2,654.6 452.9,657.8 457.5,636.3 462.1,651.3 466.7,664.2 471.4,643.8 476.0,647.0 480.6,637.3 485.2,642.7 489.9,632.0 494.5,602.9 499.1,642.7 503.7,616.9 508.3,606.1 513.0,710.5 517.6,670.7 522.2,604.0 526.8,623.3 531.5,647.0 536.1,627.6 540.7,668.5 545.3,678.2 550.0,621.2 554.6,683.6 559.2,646.0 563.8,649.2 568.4,610.4 573.1,613.6 577.7,601.8 582.3,626.6 586.9,624.4 591.6,649.2 596.2,673.9 600.8,639.5 605.4,704.1 610.1,637.3 614.7,632.0 619.3,621.2 623.9,713.8 628.5,741.7 633.2,625.5 637.8,684.7 642.4,633.0 647.0,667.5 651.7,644.9 656.3,595.3 660.9,583.5 665.5,630.9 670.2,634.1 674.8,636.3 679.4,597.5 684.0,623.3 688.6,649.2 693.3,636.3 697.9,639.5 702.5,627.6 707.1,637.3 711.8,694.4 716.4,657.8 721.0,631.5 725.6,649.2 730.3,675.0 734.9,664.2 739.5,653.5 744.1,708.4 748.7,637.3 753.4,651.3 758.0,630.9 762.6,670.7 767.2,608.3 771.9,640.6 776.5,672.9 781.1,602.9 785.7,668.5 790.4,606.1 795.0,661.0 799.6,622.3 804.2,677.2 808.8,615.8 813.5,637.3 818.1,647.0 822.7,656.7 827.3,680.4 832.0,630.9 836.6,670.7 841.2,587.8 845.8,690.1 850.5,687.9 855.1,651.3 859.7,670.7 864.3,720.2 868.9,712.7 873.6,717.0 878.2,639.5 882.8,654.6 887.4,608.3 892.1,596.4 896.7,629.8 901.3,652.4 905.9,695.5 910.5,642.7 915.2,618.0 919.8,632.0 924.4,657.8 929.0,685.8 933.7,621.2 938.3,669.6 942.9,648.1 947.5,655.6 952.2,632.0 956.8,676.1 961.4,668.5 966.0,637.3 970.6,703.0 975.3,672.9 979.9,637.3 984.5,697.6 989.1,636.3 993.8,689.0 998.4,662.1 1003.0,615.8 1007.6,636.3 1012.3,604.0 1016.9,570.6 1021.5,655.6 1026.1,629.8 1030.7,625.5 1035.4,739.6 1040.0,616.9 1044.6,642.7 1049.2,598.6 1053.9,639.5 1058.5,639.5 1063.1,615.8 1067.7,651.3 1072.4,656.7 1077.0,679.3 1081.6,640.6 1086.2,690.1 1090.8,653.5 1095.5,620.1 1100.1,662.1 1104.7,636.3 1109.3,752.5 1114.0,712.7 1118.6,687.9 1123.2,711.6 1127.8,653.5 1132.5,596.4 1137.1,649.2 1141.7,640.6 1146.3,656.7 1150.9,635.2 1155.6,680.4 1160.2,678.2 1164.8,655.6 1169.4,718.1 1174.1,703.0 1178.7,649.2 1183.3,691.2 1187.9,668.5 1192.6,703.0 1197.2,657.8 1201.8,615.8 1206.4,644.9 1211.0,705.1 1215.7,680.4 1220.3,694.4 1224.9,678.2 1229.5,663.2 1234.2,725.6 1238.8,709.5 1243.4,698.7 1248.0,683.6 1252.7,670.7 1257.3,662.1 1261.9,658.9 1266.5,662.1 1271.1,683.6 1275.8,712.7 1280.4,650.2 1285.0,677.2 1289.6,627.6 1294.3,683.6 1298.9,695.5 1303.5,685.8 1308.1,633.0 1312.8,675.0 1317.4,686.8 1322.0,629.8 1326.6,666.4 1331.2,712.7 1335.9,680.4 1340.5,679.3 1345.1,675.0 1349.7,779.4 1354.4,737.4 1359.0,692.2 1363.6,649.2 1368.2,691.2 1372.8,666.4 1377.5,667.5 1382.1,726.7 1386.7,720.2 1391.3,694.4 1396.0,693.3 1400.6,684.7 1405.2,690.1 1409.8,696.5 1414.5,717.0 1419.1,681.5 1423.7,670.7 1428.3,705.1 1432.9,687.9 1437.6,690.1 1442.2,692.2 1446.8,724.5 1451.4,714.8 1456.1,712.7 1460.7,725.6 1465.3,740.7 1469.9,708.4 1474.6,740.7 1479.2,740.7 1483.8,714.8 1488.4,693.3 1493.0,721.3 1497.7,685.8 1502.3,709.5 1506.9,696.5 1511.5,665.3 1516.2,735.3 1520.8,673.9 1525.4,665.3 1530.0,690.1 1534.7,650.2 1539.3,690.1 1543.9,703.0 1548.5,704.1 1553.1,700.8 1557.8,718.1 1562.4,707.3 1567.0,692.2 1571.6,803.1 1576.3,717.0 1580.9,684.7 1585.5,717.0 1590.1,766.5 1594.8,771.9 1599.4,717.0 1604.0,647.0" fill="none" stroke="#a8bdec" stroke-width="1"/>
<line x1="156.6" y1="627.5" x2="1604" y2="697" stroke="#808080" stroke-width="3" stroke-dasharray="7 7.6"/>
<text transform="translate(96.67 563.15) scale(1.0102 1)" font-family='"Liberation Serif", serif' font-size="19.27" fill="#6b6b6b" stroke="#6b6b6b" stroke-width="0.3" stroke-linejoin="round">4</text>
<text transform="translate(106.42 559.52) scale(1.6156 1)" font-family='"Liberation Serif", serif' font-size="13.19" fill="#6b6b6b" stroke="#6b6b6b" stroke-width="0.3" stroke-linejoin="round">0</text>
<text transform="translate(116.59 559.52) scale(1.6156 1)" font-family='"Liberation Serif", serif' font-size="13.19" fill="#6b6b6b" stroke="#6b6b6b" stroke-width="0.3" stroke-linejoin="round">0</text>
<text transform="translate(96.01 655.46) scale(1.1647 1)" font-family='"Liberation Serif", serif' font-size="18.84" fill="#6b6b6b" stroke="#6b6b6b" stroke-width="0.3" stroke-linejoin="round">3</text>
<text transform="translate(106.42 652.02) scale(1.6156 1)" font-family='"Liberation Serif", serif' font-size="13.19" fill="#6b6b6b" stroke="#6b6b6b" stroke-width="0.3" stroke-linejoin="round">0</text>
<text transform="translate(116.59 652.02) scale(1.6156 1)" font-family='"Liberation Serif", serif' font-size="13.19" fill="#6b6b6b" stroke="#6b6b6b" stroke-width="0.3" stroke-linejoin="round">0</text>
<text transform="translate(96.10 744.65) scale(1.6743 1)" font-family='"Liberation Serif", serif' font-size="13.43" fill="#6b6b6b" stroke="#6b6b6b" stroke-width="0.3" stroke-linejoin="round">2</text>
<text transform="translate(106.42 744.52) scale(1.6156 1)" font-family='"Liberation Serif", serif' font-size="13.19" fill="#6b6b6b" stroke="#6b6b6b" stroke-width="0.3" stroke-linejoin="round">0</text>
<text transform="translate(116.59 744.52) scale(1.6156 1)" font-family='"Liberation Serif", serif' font-size="13.19" fill="#6b6b6b" stroke="#6b6b6b" stroke-width="0.3" stroke-linejoin="round">0</text>
<text transform="translate(96.33 837.15) scale(1.4768 1)" font-family='"Liberation Serif", serif' font-size="13.48" fill="#6b6b6b" stroke="#6b6b6b" stroke-width="0.3" stroke-linejoin="round">1</text>
<text transform="translate(106.42 837.02) scale(1.6156 1)" font-family='"Liberation Serif", serif' font-size="13.19" fill="#6b6b6b" stroke="#6b6b6b" stroke-width="0.3" stroke-linejoin="round">0</text>
<text transform="translate(116.59 837.02) scale(1.6156 1)" font-family='"Liberation Serif", serif' font-size="13.19" fill="#6b6b6b" stroke="#6b6b6b" stroke-width="0.3" stroke-linejoin="round">0</text>
<text x="0" y="0" transform="translate(78.5 670) rotate(-90)" font-family='"Liberation Serif", serif' font-size="24" fill="#777777" text-anchor="middle" textLength="115" lengthAdjust="spacingAndGlyphs">Total Cases</text>
<text transform="translate(373.15 854.65) scale(1.4225 1)" font-family='"Liberation Serif", serif' font-size="14.34" fill="#6b6b6b" stroke="#6b6b6b" stroke-width="0.3" stroke-linejoin="round">2</text>
<text transform="translate(382.55 854.51) scale(1.3726 1)" font-family='"Liberation Serif", serif' font-size="14.07" fill="#6b6b6b" stroke="#6b6b6b" stroke-width="0.3" stroke-linejoin="round">0</text>
<text transform="translate(391.65 854.65) scale(1.4225 1)" font-family='"Liberation Serif", serif' font-size="14.34" fill="#6b6b6b" stroke="#6b6b6b" stroke-width="0.3" stroke-linejoin="round">2</text>
<text transform="translate(401.12 854.65) scale(1.2535 1)" font-family='"Liberation Serif", serif' font-size="14.39" fill="#6b6b6b" stroke="#6b6b6b" stroke-width="0.3" stroke-linejoin="round">1</text>
<text transform="translate(614.15 854.65) scale(1.4225 1)" font-family='"Liberation Serif", serif' font-size="14.34" fill="#6b6b6b" stroke="#6b6b6b" stroke-width="0.3" stroke-linejoin="round">2</text>
<text transform="translate(623.55 854.51) scale(1.3726 1)" font-family='"Liberation Serif", serif' font-size="14.07" fill="#6b6b6b" stroke="#6b6b6b" stroke-width="0.3" stroke-linejoin="round">0</text>
<text transform="translate(632.65 854.65) scale(1.4225 1)" font-family='"Liberation Serif", serif' font-size="14.34" fill="#6b6b6b" stroke="#6b6b6b" stroke-width="0.3" stroke-linejoin="round">2</text>
<text transform="translate(641.90 854.65) scale(1.4225 1)" font-family='"Liberation Serif", serif' font-size="14.34" fill="#6b6b6b" stroke="#6b6b6b" stroke-width="0.3" stroke-linejoin="round">2</text>
<text transform="translate(855.15 854.65) scale(1.4225 1)" font-family='"Liberation Serif", serif' font-size="14.34" fill="#6b6b6b" stroke="#6b6b6b" stroke-width="0.3" stroke-linejoin="round">2</text>
<text transform="translate(864.55 854.51) scale(1.3726 1)" font-family='"Liberation Serif", serif' font-size="14.07" fill="#6b6b6b" stroke="#6b6b6b" stroke-width="0.3" stroke-linejoin="round">0</text>
<text transform="translate(873.65 854.65) scale(1.4225 1)" font-family='"Liberation Serif", serif' font-size="14.34" fill="#6b6b6b" stroke="#6b6b6b" stroke-width="0.3" stroke-linejoin="round">2</text>
<text transform="translate(882.82 858.17) scale(0.9901 1)" font-family='"Liberation Serif", serif' font-size="20.10" fill="#6b6b6b" stroke="#6b6b6b" stroke-width="0.3" stroke-linejoin="round">3</text>
<text transform="translate(1096.15 854.65) scale(1.4225 1)" font-family='"Liberation Serif", serif' font-size="14.34" fill="#6b6b6b" stroke="#6b6b6b" stroke-width="0.3" stroke-linejoin="round">2</text>
<text transform="translate(1105.55 854.51) scale(1.3726 1)" font-family='"Liberation Serif", serif' font-size="14.07" fill="#6b6b6b" stroke="#6b6b6b" stroke-width="0.3" stroke-linejoin="round">0</text>
<text transform="translate(1114.65 854.65) scale(1.4225 1)" font-family='"Liberation Serif", serif' font-size="14.34" fill="#6b6b6b" stroke="#6b6b6b" stroke-width="0.3" stroke-linejoin="round">2</text>
<text transform="translate(1124.42 858.37) scale(0.8588 1)" font-family='"Liberation Serif", serif' font-size="20.56" fill="#6b6b6b" stroke="#6b6b6b" stroke-width="0.3" stroke-linejoin="round">4</text>
<text transform="translate(1337.15 854.65) scale(1.4225 1)" font-family='"Liberation Serif", serif' font-size="14.34" fill="#6b6b6b" stroke="#6b6b6b" stroke-width="0.3" stroke-linejoin="round">2</text>
<text transform="translate(1346.55 854.51) scale(1.3726 1)" font-family='"Liberation Serif", serif' font-size="14.07" fill="#6b6b6b" stroke="#6b6b6b" stroke-width="0.3" stroke-linejoin="round">0</text>
<text transform="translate(1355.65 854.65) scale(1.4225 1)" font-family='"Liberation Serif", serif' font-size="14.34" fill="#6b6b6b" stroke="#6b6b6b" stroke-width="0.3" stroke-linejoin="round">2</text>
<text transform="translate(1364.60 858.17) scale(1.0034 1)" font-family='"Liberation Serif", serif' font-size="20.33" fill="#6b6b6b" stroke="#6b6b6b" stroke-width="0.3" stroke-linejoin="round">5</text>
<text transform="translate(1578.15 854.65) scale(1.4225 1)" font-family='"Liberation Serif", serif' font-size="14.34" fill="#6b6b6b" stroke="#6b6b6b" stroke-width="0.3" stroke-linejoin="round">2</text>
<text transform="translate(1587.55 854.51) scale(1.3726 1)" font-family='"Liberation Serif", serif' font-size="14.07" fill="#6b6b6b" stroke="#6b6b6b" stroke-width="0.3" stroke-linejoin="round">0</text>
<text transform="translate(1596.65 854.65) scale(1.4225 1)" font-family='"Liberation Serif", serif' font-size="14.34" fill="#6b6b6b" stroke="#6b6b6b" stroke-width="0.3" stroke-linejoin="round">2</text>
<text transform="translate(1605.95 854.45) scale(0.9766 1)" font-family='"Liberation Serif", serif' font-size="19.66" fill="#6b6b6b" stroke="#6b6b6b" stroke-width="0.3" stroke-linejoin="round">6</text>
<rect x="1475.4" y="161.6" width="436" height="112" fill="#ffffff" stroke="#111111" stroke-width="2" rx="27"/>
<text x="1503.8" y="199.0" font-family='"Liberation Serif", serif' font-size="24" fill="#0e2290" textLength="157.0" lengthAdjust="spacingAndGlyphs">Select a Disease</text>
<path d="M1866 185.5 L1874 193.5 L1882 185.5" fill="none" stroke="#666666" stroke-width="1.3"/>
<rect x="1499.5" y="216.5" width="388" height="40" fill="#ffffff" stroke="#ececec" stroke-width="1.2"/>
<text x="1507.5" y="245.6" font-family='"Liberation Serif", serif' font-size="24" fill="#1a1a1a" textLength="110.5" lengthAdjust="spacingAndGlyphs">Chlamydia</text>
<path d="M1855.5 234 L1866.5 244.5 L1877.5 234" fill="none" stroke="#1a1a1a" stroke-width="1.8"/>
<rect x="1630.2" y="276" width="281" height="142" fill="#ffffff" stroke="#111111" stroke-width="1.6" rx="28"/>
<text x="1658.7" y="308.7" font-family='"Liberation Serif", serif' font-size="18" fill="#0e2290" textLength="131.0" lengthAdjust="spacingAndGlyphs">Select Year Range</text>
<rect x="1659" y="323.5" width="106.5" height="37" fill="#ffffff" stroke="#e8e8e8" stroke-width="1.2"/>
<rect x="1775.5" y="323.5" width="107" height="37" fill="#ffffff" stroke="#e8e8e8" stroke-width="1.2"/>
<text transform="translate(1668.78 347.27) scale(1.6017 1)" font-family='"Liberation Serif", serif' font-size="13.81" fill="#111111" stroke="#111111" stroke-width="0.25" stroke-linejoin="round">2</text>
<text transform="translate(1678.89 347.14) scale(1.5455 1)" font-family='"Liberation Serif", serif' font-size="13.56" fill="#111111" stroke="#111111" stroke-width="0.25" stroke-linejoin="round">0</text>
<text transform="translate(1688.68 347.27) scale(1.6017 1)" font-family='"Liberation Serif", serif' font-size="13.81" fill="#111111" stroke="#111111" stroke-width="0.25" stroke-linejoin="round">2</text>
<text transform="translate(1698.79 347.14) scale(1.5455 1)" font-family='"Liberation Serif", serif' font-size="13.56" fill="#111111" stroke="#111111" stroke-width="0.25" stroke-linejoin="round">0</text>
<text transform="translate(1785.49 347.27) scale(1.5810 1)" font-family='"Liberation Serif", serif' font-size="13.81" fill="#111111" stroke="#111111" stroke-width="0.25" stroke-linejoin="round">2</text>
<text transform="translate(1795.47 347.14) scale(1.5256 1)" font-family='"Liberation Serif", serif' font-size="13.56" fill="#111111" stroke="#111111" stroke-width="0.25" stroke-linejoin="round">0</text>
<text transform="translate(1805.14 347.27) scale(1.5810 1)" font-family='"Liberation Serif", serif' font-size="13.81" fill="#111111" stroke="#111111" stroke-width="0.25" stroke-linejoin="round">2</text>
<text transform="translate(1815.02 347.09) scale(1.0868 1)" font-family='"Liberation Serif", serif' font-size="18.92" fill="#111111" stroke="#111111" stroke-width="0.25" stroke-linejoin="round">6</text>
<line x1="1699" y1="390.2" x2="1853" y2="390.2" stroke="#6b6b6b" stroke-width="4"/>
<circle cx="1681" cy="390.2" r="16.8" fill="#ffffff" stroke="#6b6b6b" stroke-width="3"/>
<circle cx="1871.5" cy="390.2" r="16.8" fill="#ffffff" stroke="#6b6b6b" stroke-width="3"/>
<rect x="1632.2" y="418" width="279" height="267" fill="#ffffff" stroke="#111111" stroke-width="1.6" rx="27"/>
<text x="1660.6" y="455.8" font-family='"Liberation Serif", serif' font-size="23.5" fill="#0e2290" textLength="107.5" lengthAdjust="spacingAndGlyphs">Select date</text>
<rect x="1660.6" y="472.5" width="139.5" height="40" fill="#ffffff" stroke="#ececec" stroke-width="1.2"/>
<text transform="translate(1673.76 498.40) scale(1.4337 1)" font-family='"Liberation Serif", serif' font-size="13.94" fill="#6e6e6e" stroke="#6e6e6e" stroke-width="0.2" stroke-linejoin="round">1</text>
<text transform="translate(1685.55 500.98) scale(0.3814 1)" font-family='"Liberation Serif", serif' font-size="24.25" fill="#6e6e6e" stroke="#6e6e6e" stroke-width="0.2" stroke-linejoin="round">/</text>
<text transform="translate(1689.36 498.40) scale(1.4337 1)" font-family='"Liberation Serif", serif' font-size="13.94" fill="#6e6e6e" stroke="#6e6e6e" stroke-width="0.2" stroke-linejoin="round">1</text>
<text transform="translate(1699.20 498.40) scale(1.6203 1)" font-family='"Liberation Serif", serif' font-size="13.89" fill="#6e6e6e" stroke="#6e6e6e" stroke-width="0.2" stroke-linejoin="round">2</text>
<text transform="translate(1711.20 500.98) scale(0.3814 1)" font-family='"Liberation Serif", serif' font-size="24.25" fill="#6e6e6e" stroke="#6e6e6e" stroke-width="0.2" stroke-linejoin="round">/</text>
<text transform="translate(1714.80 498.40) scale(1.6203 1)" font-family='"Liberation Serif", serif' font-size="13.89" fill="#6e6e6e" stroke="#6e6e6e" stroke-width="0.2" stroke-linejoin="round">2</text>
<text transform="translate(1725.02 498.26) scale(1.5635 1)" font-family='"Liberation Serif", serif' font-size="13.63" fill="#6e6e6e" stroke="#6e6e6e" stroke-width="0.2" stroke-linejoin="round">0</text>
<text transform="translate(1734.92 498.40) scale(1.6203 1)" font-family='"Liberation Serif", serif' font-size="13.89" fill="#6e6e6e" stroke="#6e6e6e" stroke-width="0.2" stroke-linejoin="round">2</text>
<text transform="translate(1745.14 498.26) scale(1.5635 1)" font-family='"Liberation Serif", serif' font-size="13.63" fill="#6e6e6e" stroke="#6e6e6e" stroke-width="0.2" stroke-linejoin="round">0</text>
<rect x="1775.5" y="481.8" width="18" height="15.5" fill="none" stroke="#8a8a8a" stroke-width="1.1"/>
<line x1="1775.5" y1="485.3" x2="1793.5" y2="485.3" stroke="#8a8a8a" stroke-width="1.2"/>
<line x1="1779.5" y1="480.3" x2="1779.5" y2="483.3" stroke="#8a8a8a" stroke-width="1"/>
<line x1="1789.5" y1="480.3" x2="1789.5" y2="483.3" stroke="#8a8a8a" stroke-width="1"/>
<rect x="1778.3" y="487.8" width="1.3" height="1.3" fill="#9a9a9a"/>
<rect x="1781.7" y="487.8" width="1.3" height="1.3" fill="#9a9a9a"/>
<rect x="1785.1" y="487.8" width="1.3" height="1.3" fill="#9a9a9a"/>
<rect x="1788.5" y="487.8" width="1.3" height="1.3" fill="#9a9a9a"/>
<rect x="1778.3" y="490.6" width="1.3" height="1.3" fill="#9a9a9a"/>
<rect x="1781.7" y="490.6" width="1.3" height="1.3" fill="#9a9a9a"/>
<rect x="1785.1" y="490.6" width="1.3" height="1.3" fill="#9a9a9a"/>
<rect x="1788.5" y="490.6" width="1.3" height="1.3" fill="#9a9a9a"/>
<rect x="1778.3" y="493.40000000000003" width="1.3" height="1.3" fill="#9a9a9a"/>
<rect x="1781.7" y="493.40000000000003" width="1.3" height="1.3" fill="#9a9a9a"/>
<rect x="1785.1" y="493.40000000000003" width="1.3" height="1.3" fill="#9a9a9a"/>
<rect x="1788.5" y="493.40000000000003" width="1.3" height="1.3" fill="#9a9a9a"/>
<rect x="1660.6" y="525.6" width="139.5" height="40" fill="#ffffff" stroke="#ececec" stroke-width="1.2"/>
<text transform="translate(1673.77 550.40) scale(1.3794 1)" font-family='"Liberation Serif", serif' font-size="13.94" fill="#6e6e6e" stroke="#6e6e6e" stroke-width="0.2" stroke-linejoin="round">1</text>
<text transform="translate(1685.12 552.98) scale(0.3663 1)" font-family='"Liberation Serif", serif' font-size="24.25" fill="#6e6e6e" stroke="#6e6e6e" stroke-width="0.2" stroke-linejoin="round">/</text>
<text transform="translate(1688.80 550.40) scale(1.3794 1)" font-family='"Liberation Serif", serif' font-size="13.94" fill="#6e6e6e" stroke="#6e6e6e" stroke-width="0.2" stroke-linejoin="round">1</text>
<text transform="translate(1698.49 550.40) scale(1.3794 1)" font-family='"Liberation Serif", serif' font-size="13.94" fill="#6e6e6e" stroke="#6e6e6e" stroke-width="0.2" stroke-linejoin="round">1</text>
<text transform="translate(1709.84 552.98) scale(0.3663 1)" font-family='"Liberation Serif", serif' font-size="24.25" fill="#6e6e6e" stroke="#6e6e6e" stroke-width="0.2" stroke-linejoin="round">/</text>
<text transform="translate(1713.30 550.40) scale(1.5594 1)" font-family='"Liberation Serif", serif' font-size="13.89" fill="#6e6e6e" stroke="#6e6e6e" stroke-width="0.2" stroke-linejoin="round">2</text>
<text transform="translate(1723.14 550.26) scale(1.5047 1)" font-family='"Liberation Serif", serif' font-size="13.63" fill="#6e6e6e" stroke="#6e6e6e" stroke-width="0.2" stroke-linejoin="round">0</text>
<text transform="translate(1732.68 550.40) scale(1.5594 1)" font-family='"Liberation Serif", serif' font-size="13.89" fill="#6e6e6e" stroke="#6e6e6e" stroke-width="0.2" stroke-linejoin="round">2</text>
<text transform="translate(1742.43 550.21) scale(1.0735 1)" font-family='"Liberation Serif", serif' font-size="18.99" fill="#6e6e6e" stroke="#6e6e6e" stroke-width="0.2" stroke-linejoin="round">6</text>
<rect x="1775.5" y="534.9" width="18" height="15.5" fill="none" stroke="#8a8a8a" stroke-width="1.1"/>
<line x1="1775.5" y1="538.4" x2="1793.5" y2="538.4" stroke="#8a8a8a" stroke-width="1.2"/>
<line x1="1779.5" y1="533.4" x2="1779.5" y2="536.4" stroke="#8a8a8a" stroke-width="1"/>
<line x1="1789.5" y1="533.4" x2="1789.5" y2="536.4" stroke="#8a8a8a" stroke-width="1"/>
<rect x="1778.3" y="540.9" width="1.3" height="1.3" fill="#9a9a9a"/>
<rect x="1781.7" y="540.9" width="1.3" height="1.3" fill="#9a9a9a"/>
<rect x="1785.1" y="540.9" width="1.3" height="1.3" fill="#9a9a9a"/>
<rect x="1788.5" y="540.9" width="1.3" height="1.3" fill="#9a9a9a"/>
<rect x="1778.3" y="543.6999999999999" width="1.3" height="1.3" fill="#9a9a9a"/>
<rect x="1781.7" y="543.6999999999999" width="1.3" height="1.3" fill="#9a9a9a"/>
<rect x="1785.1" y="543.6999999999999" width="1.3" height="1.3" fill="#9a9a9a"/>
<rect x="1788.5" y="543.6999999999999" width="1.3" height="1.3" fill="#9a9a9a"/>
<rect x="1778.3" y="546.5" width="1.3" height="1.3" fill="#9a9a9a"/>
<rect x="1781.7" y="546.5" width="1.3" height="1.3" fill="#9a9a9a"/>
<rect x="1785.1" y="546.5" width="1.3" height="1.3" fill="#9a9a9a"/>
<rect x="1788.5" y="546.5" width="1.3" height="1.3" fill="#9a9a9a"/>
<line x1="1700.5" y1="595" x2="1852.5" y2="595" stroke="#6b6b6b" stroke-width="4"/>
<circle cx="1682.5" cy="595" r="16.8" fill="#ffffff" stroke="#6b6b6b" stroke-width="3"/>
<circle cx="1870.5" cy="595" r="16.8" fill="#ffffff" stroke="#6b6b6b" stroke-width="3"/>
<text x="87.0" y="898.9" font-family='"Liberation Serif", serif' font-size="19.5" fill="#2b2b2b" textLength="38.7" lengthAdjust="spacingAndGlyphs">Year</text>
<text x="166.0" y="898.9" font-family='"Liberation Serif", serif' font-size="19.5" fill="#2b2b2b" textLength="57.2" lengthAdjust="spacingAndGlyphs">Month</text>
<text x="257.8" y="898.9" font-family='"Liberation Serif", serif' font-size="19.5" fill="#2b2b2b" textLength="33.6" lengthAdjust="spacingAndGlyphs">Day</text>
<text x="307.8" y="898.9" font-family='"Liberation Serif", serif' font-size="19.5" fill="#2b2b2b" textLength="105.2" lengthAdjust="spacingAndGlyphs">mmwr_year</text>
<text x="429.8" y="898.9" font-family='"Liberation Serif", serif' font-size="19.5" fill="#2b2b2b" textLength="112.6" lengthAdjust="spacingAndGlyphs">mmwr_week</text>
<text x="573.7" y="898.9" font-family='"Liberation Serif", serif' font-size="19.5" fill="#2b2b2b" textLength="61.1" lengthAdjust="spacingAndGlyphs">disease</text>
<text x="665.8" y="898.9" font-family='"Liberation Serif", serif' font-size="19.5" fill="#2b2b2b" textLength="110.2" lengthAdjust="spacingAndGlyphs">Sum of cases</text>
<circle cx="822.4" cy="887.6" r="5" fill="#a6a6a6"/>
<defs><clipPath id="tclip"><rect x="60" y="905" width="740" height="274.3"/></clipPath></defs>
<g clip-path="url(#tclip)">
<rect x="72" y="946.5600000000001" width="712.4" height="26" fill="#ededed"/>
<rect x="72" y="1002.2800000000001" width="712.4" height="26" fill="#ededed"/>
<rect x="72" y="1058.0" width="712.4" height="26" fill="#ededed"/>
<rect x="72" y="1113.72" width="712.4" height="26" fill="#ededed"/>
<rect x="72" y="1169.44" width="712.4" height="26" fill="#ededed"/>
<text x="131.4" y="939.0" font-family='"Liberation Sans", sans-serif' font-size="19.2" fill="#333333" text-anchor="end" textLength="41.0" lengthAdjust="spacingAndGlyphs">2020</text>
<text x="146.9" y="939.0" font-family='"Liberation Sans", sans-serif' font-size="19.2" fill="#333333" textLength="64.5" lengthAdjust="spacingAndGlyphs">January</text>
<text x="291.4" y="939.0" font-family='"Liberation Sans", sans-serif' font-size="19.2" fill="#333333" text-anchor="end" textLength="20.5" lengthAdjust="spacingAndGlyphs">12</text>
<text x="413.7" y="939.0" font-family='"Liberation Sans", sans-serif' font-size="19.2" fill="#333333" text-anchor="end" textLength="41.0" lengthAdjust="spacingAndGlyphs">2020</text>
<text x="542.4" y="939.0" font-family='"Liberation Sans", sans-serif' font-size="19.2" fill="#333333" text-anchor="end" textLength="10.5" lengthAdjust="spacingAndGlyphs">3</text>
<text x="557.5" y="939.0" font-family='"Liberation Sans", sans-serif' font-size="19.2" fill="#333333" textLength="89.5" lengthAdjust="spacingAndGlyphs">Chlamydia</text>
<text x="776.0" y="939.0" font-family='"Liberation Sans", sans-serif' font-size="19.2" fill="#333333" text-anchor="end" textLength="31.0" lengthAdjust="spacingAndGlyphs">378</text>
<text x="131.4" y="966.9" font-family='"Liberation Sans", sans-serif' font-size="19.2" fill="#333333" text-anchor="end" textLength="41.0" lengthAdjust="spacingAndGlyphs">2020</text>
<text x="146.9" y="966.9" font-family='"Liberation Sans", sans-serif' font-size="19.2" fill="#333333" textLength="64.5" lengthAdjust="spacingAndGlyphs">January</text>
<text x="291.4" y="966.9" font-family='"Liberation Sans", sans-serif' font-size="19.2" fill="#333333" text-anchor="end" textLength="20.5" lengthAdjust="spacingAndGlyphs">19</text>
<text x="413.7" y="966.9" font-family='"Liberation Sans", sans-serif' font-size="19.2" fill="#333333" text-anchor="end" textLength="41.0" lengthAdjust="spacingAndGlyphs">2020</text>
<text x="542.4" y="966.9" font-family='"Liberation Sans", sans-serif' font-size="19.2" fill="#333333" text-anchor="end" textLength="10.5" lengthAdjust="spacingAndGlyphs">4</text>
<text x="557.5" y="966.9" font-family='"Liberation Sans", sans-serif' font-size="19.2" fill="#333333" textLength="89.5" lengthAdjust="spacingAndGlyphs">Chlamydia</text>
<text x="776.0" y="966.9" font-family='"Liberation Sans", sans-serif' font-size="19.2" fill="#333333" text-anchor="end" textLength="31.0" lengthAdjust="spacingAndGlyphs">381</text>
<text x="131.4" y="994.7" font-family='"Liberation Sans", sans-serif' font-size="19.2" fill="#333333" text-anchor="end" textLength="41.0" lengthAdjust="spacingAndGlyphs">2020</text>
<text x="146.9" y="994.7" font-family='"Liberation Sans", sans-serif' font-size="19.2" fill="#333333" textLength="64.5" lengthAdjust="spacingAndGlyphs">January</text>
<text x="291.4" y="994.7" font-family='"Liberation Sans", sans-serif' font-size="19.2" fill="#333333" text-anchor="end" textLength="20.5" lengthAdjust="spacingAndGlyphs">26</text>
<text x="413.7" y="994.7" font-family='"Liberation Sans", sans-serif' font-size="19.2" fill="#333333" text-anchor="end" textLength="41.0" lengthAdjust="spacingAndGlyphs">2020</text>
<text x="542.4" y="994.7" font-family='"Liberation Sans", sans-serif' font-size="19.2" fill="#333333" text-anchor="end" textLength="10.5" lengthAdjust="spacingAndGlyphs">5</text>
<text x="557.5" y="994.7" font-family='"Liberation Sans", sans-serif' font-size="19.2" fill="#333333" textLength="89.5" lengthAdjust="spacingAndGlyphs">Chlamydia</text>
<text x="776.0" y="994.7" font-family='"Liberation Sans", sans-serif' font-size="19.2" fill="#333333" text-anchor="end" textLength="31.0" lengthAdjust="spacingAndGlyphs">426</text>
<text x="131.4" y="1022.6" font-family='"Liberation Sans", sans-serif' font-size="19.2" fill="#333333" text-anchor="end" textLength="41.0" lengthAdjust="spacingAndGlyphs">2020</text>
<text x="146.9" y="1022.6" font-family='"Liberation Sans", sans-serif' font-size="19.2" fill="#333333" textLength="75.0" lengthAdjust="spacingAndGlyphs">February</text>
<text x="291.4" y="1022.6" font-family='"Liberation Sans", sans-serif' font-size="19.2" fill="#333333" text-anchor="end" textLength="10.5" lengthAdjust="spacingAndGlyphs">2</text>
<text x="413.7" y="1022.6" font-family='"Liberation Sans", sans-serif' font-size="19.2" fill="#333333" text-anchor="end" textLength="41.0" lengthAdjust="spacingAndGlyphs">2020</text>
<text x="542.4" y="1022.6" font-family='"Liberation Sans", sans-serif' font-size="19.2" fill="#333333" text-anchor="end" textLength="10.5" lengthAdjust="spacingAndGlyphs">6</text>
<text x="557.5" y="1022.6" font-family='"Liberation Sans", sans-serif' font-size="19.2" fill="#333333" textLength="89.5" lengthAdjust="spacingAndGlyphs">Chlamydia</text>
<text x="776.0" y="1022.6" font-family='"Liberation Sans", sans-serif' font-size="19.2" fill="#333333" text-anchor="end" textLength="31.0" lengthAdjust="spacingAndGlyphs">390</text>
<text x="131.4" y="1050.4" font-family='"Liberation Sans", sans-serif' font-size="19.2" fill="#333333" text-anchor="end" textLength="41.0" lengthAdjust="spacingAndGlyphs">2020</text>
<text x="146.9" y="1050.4" font-family='"Liberation Sans", sans-serif' font-size="19.2" fill="#333333" textLength="75.0" lengthAdjust="spacingAndGlyphs">February</text>
<text x="291.4" y="1050.4" font-family='"Liberation Sans", sans-serif' font-size="19.2" fill="#333333" text-anchor="end" textLength="10.5" lengthAdjust="spacingAndGlyphs">9</text>
<text x="413.7" y="1050.4" font-family='"Liberation Sans", sans-serif' font-size="19.2" fill="#333333" text-anchor="end" textLength="41.0" lengthAdjust="spacingAndGlyphs">2020</text>
<text x="542.4" y="1050.4" font-family='"Liberation Sans", sans-serif' font-size="19.2" fill="#333333" text-anchor="end" textLength="10.5" lengthAdjust="spacingAndGlyphs">7</text>
<text x="557.5" y="1050.4" font-family='"Liberation Sans", sans-serif' font-size="19.2" fill="#333333" textLength="89.5" lengthAdjust="spacingAndGlyphs">Chlamydia</text>
<text x="776.0" y="1050.4" font-family='"Liberation Sans", sans-serif' font-size="19.2" fill="#333333" text-anchor="end" textLength="31.0" lengthAdjust="spacingAndGlyphs">417</text>
<text x="131.4" y="1078.3" font-family='"Liberation Sans", sans-serif' font-size="19.2" fill="#333333" text-anchor="end" textLength="41.0" lengthAdjust="spacingAndGlyphs">2020</text>
<text x="146.9" y="1078.3" font-family='"Liberation Sans", sans-serif' font-size="19.2" fill="#333333" textLength="75.0" lengthAdjust="spacingAndGlyphs">February</text>
<text x="291.4" y="1078.3" font-family='"Liberation Sans", sans-serif' font-size="19.2" fill="#333333" text-anchor="end" textLength="20.5" lengthAdjust="spacingAndGlyphs">16</text>
<text x="413.7" y="1078.3" font-family='"Liberation Sans", sans-serif' font-size="19.2" fill="#333333" text-anchor="end" textLength="41.0" lengthAdjust="spacingAndGlyphs">2020</text>
<text x="542.4" y="1078.3" font-family='"Liberation Sans", sans-serif' font-size="19.2" fill="#333333" text-anchor="end" textLength="10.5" lengthAdjust="spacingAndGlyphs">8</text>
<text x="557.5" y="1078.3" font-family='"Liberation Sans", sans-serif' font-size="19.2" fill="#333333" textLength="89.5" lengthAdjust="spacingAndGlyphs">Chlamydia</text>
<text x="776.0" y="1078.3" font-family='"Liberation Sans", sans-serif' font-size="19.2" fill="#333333" text-anchor="end" textLength="31.0" lengthAdjust="spacingAndGlyphs">329</text>
<text x="131.4" y="1106.2" font-family='"Liberation Sans", sans-serif' font-size="19.2" fill="#333333" text-anchor="end" textLength="41.0" lengthAdjust="spacingAndGlyphs">2020</text>
<text x="146.9" y="1106.2" font-family='"Liberation Sans", sans-serif' font-size="19.2" fill="#333333" textLength="75.0" lengthAdjust="spacingAndGlyphs">February</text>
<text x="291.4" y="1106.2" font-family='"Liberation Sans", sans-serif' font-size="19.2" fill="#333333" text-anchor="end" textLength="20.5" lengthAdjust="spacingAndGlyphs">23</text>
<text x="413.7" y="1106.2" font-family='"Liberation Sans", sans-serif' font-size="19.2" fill="#333333" text-anchor="end" textLength="41.0" lengthAdjust="spacingAndGlyphs">2020</text>
<text x="542.4" y="1106.2" font-family='"Liberation Sans", sans-serif' font-size="19.2" fill="#333333" text-anchor="end" textLength="10.5" lengthAdjust="spacingAndGlyphs">9</text>
<text x="557.5" y="1106.2" font-family='"Liberation Sans", sans-serif' font-size="19.2" fill="#333333" textLength="89.5" lengthAdjust="spacingAndGlyphs">Chlamydia</text>
<text x="776.0" y="1106.2" font-family='"Liberation Sans", sans-serif' font-size="19.2" fill="#333333" text-anchor="end" textLength="31.0" lengthAdjust="spacingAndGlyphs">359</text>
<text x="131.4" y="1134.0" font-family='"Liberation Sans", sans-serif' font-size="19.2" fill="#333333" text-anchor="end" textLength="41.0" lengthAdjust="spacingAndGlyphs">2020</text>
<text x="146.9" y="1134.0" font-family='"Liberation Sans", sans-serif' font-size="19.2" fill="#333333" textLength="54.5" lengthAdjust="spacingAndGlyphs">March</text>
<text x="291.4" y="1134.0" font-family='"Liberation Sans", sans-serif' font-size="19.2" fill="#333333" text-anchor="end" textLength="10.5" lengthAdjust="spacingAndGlyphs">1</text>
<text x="413.7" y="1134.0" font-family='"Liberation Sans", sans-serif' font-size="19.2" fill="#333333" text-anchor="end" textLength="41.0" lengthAdjust="spacingAndGlyphs">2020</text>
<text x="542.4" y="1134.0" font-family='"Liberation Sans", sans-serif' font-size="19.2" fill="#333333" text-anchor="end" textLength="20.5" lengthAdjust="spacingAndGlyphs">10</text>
<text x="557.5" y="1134.0" font-family='"Liberation Sans", sans-serif' font-size="19.2" fill="#333333" textLength="89.5" lengthAdjust="spacingAndGlyphs">Chlamydia</text>
<text x="776.0" y="1134.0" font-family='"Liberation Sans", sans-serif' font-size="19.2" fill="#333333" text-anchor="end" textLength="31.0" lengthAdjust="spacingAndGlyphs">363</text>
<text x="131.4" y="1161.9" font-family='"Liberation Sans", sans-serif' font-size="19.2" fill="#333333" text-anchor="end" textLength="41.0" lengthAdjust="spacingAndGlyphs">2020</text>
<text x="146.9" y="1161.9" font-family='"Liberation Sans", sans-serif' font-size="19.2" fill="#333333" textLength="54.5" lengthAdjust="spacingAndGlyphs">March</text>
<text x="291.4" y="1161.9" font-family='"Liberation Sans", sans-serif' font-size="19.2" fill="#333333" text-anchor="end" textLength="10.5" lengthAdjust="spacingAndGlyphs">8</text>
<text x="413.7" y="1161.9" font-family='"Liberation Sans", sans-serif' font-size="19.2" fill="#333333" text-anchor="end" textLength="41.0" lengthAdjust="spacingAndGlyphs">2020</text>
<text x="542.4" y="1161.9" font-family='"Liberation Sans", sans-serif' font-size="19.2" fill="#333333" text-anchor="end" textLength="20.5" lengthAdjust="spacingAndGlyphs">11</text>
<text x="557.5" y="1161.9" font-family='"Liberation Sans", sans-serif' font-size="19.2" fill="#333333" textLength="89.5" lengthAdjust="spacingAndGlyphs">Chlamydia</text>
<text x="776.0" y="1161.9" font-family='"Liberation Sans", sans-serif' font-size="19.2" fill="#333333" text-anchor="end" textLength="31.0" lengthAdjust="spacingAndGlyphs">386</text>
<text x="131.4" y="1189.7" font-family='"Liberation Sans", sans-serif' font-size="19.2" fill="#333333" text-anchor="end" textLength="41.0" lengthAdjust="spacingAndGlyphs">2020</text>
<text x="146.9" y="1189.7" font-family='"Liberation Sans", sans-serif' font-size="19.2" fill="#333333" textLength="54.5" lengthAdjust="spacingAndGlyphs">March</text>
<text x="291.4" y="1189.7" font-family='"Liberation Sans", sans-serif' font-size="19.2" fill="#333333" text-anchor="end" textLength="20.5" lengthAdjust="spacingAndGlyphs">15</text>
<text x="413.7" y="1189.7" font-family='"Liberation Sans", sans-serif' font-size="19.2" fill="#333333" text-anchor="end" textLength="41.0" lengthAdjust="spacingAndGlyphs">2020</text>
<text x="542.4" y="1189.7" font-family='"Liberation Sans", sans-serif' font-size="19.2" fill="#333333" text-anchor="end" textLength="20.5" lengthAdjust="spacingAndGlyphs">12</text>
<text x="557.5" y="1189.7" font-family='"Liberation Sans", sans-serif' font-size="19.2" fill="#333333" textLength="89.5" lengthAdjust="spacingAndGlyphs">Chlamydia</text>
<text x="776.0" y="1189.7" font-family='"Liberation Sans", sans-serif' font-size="19.2" fill="#333333" text-anchor="end" textLength="31.0" lengthAdjust="spacingAndGlyphs">348</text>
</g>
<text transform="translate(80.65 1198.80) scale(1.1982 1)" font-family='"Liberation Serif", serif' font-size="19.54" fill="#b3b3b3" font-weight="bold">Total</text>
<text transform="translate(714.54 1198.70) scale(1.3153 1)" font-family='"Liberation Serif", serif' font-size="20.04" fill="#b3b3b3" font-weight="bold">8</text>
<text transform="translate(727.00 1198.70) scale(1.3153 1)" font-family='"Liberation Serif", serif' font-size="20.04" fill="#b3b3b3" font-weight="bold">8</text>
<text transform="translate(739.46 1198.70) scale(1.3153 1)" font-family='"Liberation Serif", serif' font-size="20.04" fill="#b3b3b3" font-weight="bold">8</text>
<text transform="translate(752.47 1202.62) scale(1.1605 1)" font-family='"Liberation Serif", serif' font-size="21.02" fill="#b3b3b3" font-weight="bold">4</text>
<text transform="translate(763.66 1202.62) scale(1.3015 1)" font-family='"Liberation Serif", serif' font-size="21.10" fill="#b3b3b3" font-weight="bold">7</text>
<line x1="44" y1="1213" x2="1910" y2="1213" stroke="#333333" stroke-width="2.2" stroke-dasharray="2.2 1.8"/>
<text x="972.6" y="899.4" font-family='"Liberation Serif", serif' font-size="27.5" fill="#605e5c" font-weight="bold" textLength="252.7" lengthAdjust="spacingAndGlyphs">Total Cases per Year</text>
<text transform="translate(1003.86 969.75) scale(1.3607 1)" font-family='"Liberation Serif", serif' font-size="13.48" fill="#6b6b6b" stroke="#6b6b6b" stroke-width="0.3" stroke-linejoin="round">1</text>
<text transform="translate(1012.73 973.06) scale(1.0884 1)" font-family='"Liberation Serif", serif' font-size="19.06" fill="#6b6b6b" stroke="#6b6b6b" stroke-width="0.3" stroke-linejoin="round">5</text>
<text transform="translate(1022.59 969.62) scale(1.4897 1)" font-family='"Liberation Serif", serif' font-size="13.19" fill="#6b6b6b" stroke="#6b6b6b" stroke-width="0.3" stroke-linejoin="round">0</text>
<text transform="translate(1031.99 969.62) scale(1.4897 1)" font-family='"Liberation Serif", serif' font-size="13.19" fill="#6b6b6b" stroke="#6b6b6b" stroke-width="0.3" stroke-linejoin="round">0</text>
<text transform="translate(1041.39 969.62) scale(1.4897 1)" font-family='"Liberation Serif", serif' font-size="13.19" fill="#6b6b6b" stroke="#6b6b6b" stroke-width="0.3" stroke-linejoin="round">0</text>
<text transform="translate(1003.86 1038.75) scale(1.3607 1)" font-family='"Liberation Serif", serif' font-size="13.48" fill="#6b6b6b" stroke="#6b6b6b" stroke-width="0.3" stroke-linejoin="round">1</text>
<text transform="translate(1013.19 1038.62) scale(1.4897 1)" font-family='"Liberation Serif", serif' font-size="13.19" fill="#6b6b6b" stroke="#6b6b6b" stroke-width="0.3" stroke-linejoin="round">0</text>
<text transform="translate(1022.59 1038.62) scale(1.4897 1)" font-family='"Liberation Serif", serif' font-size="13.19" fill="#6b6b6b" stroke="#6b6b6b" stroke-width="0.3" stroke-linejoin="round">0</text>
<text transform="translate(1031.99 1038.62) scale(1.4897 1)" font-family='"Liberation Serif", serif' font-size="13.19" fill="#6b6b6b" stroke="#6b6b6b" stroke-width="0.3" stroke-linejoin="round">0</text>
<text transform="translate(1041.39 1038.62) scale(1.4897 1)" font-family='"Liberation Serif", serif' font-size="13.19" fill="#6b6b6b" stroke="#6b6b6b" stroke-width="0.3" stroke-linejoin="round">0</text>
<text transform="translate(1012.73 1110.96) scale(1.0884 1)" font-family='"Liberation Serif", serif' font-size="19.06" fill="#6b6b6b" stroke="#6b6b6b" stroke-width="0.3" stroke-linejoin="round">5</text>
<text transform="translate(1022.59 1107.52) scale(1.4897 1)" font-family='"Liberation Serif", serif' font-size="13.19" fill="#6b6b6b" stroke="#6b6b6b" stroke-width="0.3" stroke-linejoin="round">0</text>
<text transform="translate(1031.99 1107.52) scale(1.4897 1)" font-family='"Liberation Serif", serif' font-size="13.19" fill="#6b6b6b" stroke="#6b6b6b" stroke-width="0.3" stroke-linejoin="round">0</text>
<text transform="translate(1041.39 1107.52) scale(1.4897 1)" font-family='"Liberation Serif", serif' font-size="13.19" fill="#6b6b6b" stroke="#6b6b6b" stroke-width="0.3" stroke-linejoin="round">0</text>
<text transform="translate(1041.39 1176.42) scale(1.4897 1)" font-family='"Liberation Serif", serif' font-size="13.19" fill="#6b6b6b" stroke="#6b6b6b" stroke-width="0.3" stroke-linejoin="round">0</text>
<text x="0" y="0" transform="translate(985 1046) rotate(-90)" font-family='"Liberation Serif", serif' font-size="20" fill="#777777" text-anchor="middle" textLength="88" lengthAdjust="spacingAndGlyphs">Total Cases</text>
<rect x="1065.6" y="958.8" width="109.20000000000005" height="212.4000000000001" fill="#89a4e3"/>
<rect x="1178.6" y="956.3" width="119.5" height="214.9000000000001" fill="#89a4e3"/>
<rect x="1301.9" y="957.6" width="119.89999999999986" height="213.60000000000002" fill="#89a4e3"/>
<rect x="1425.6" y="959.9" width="119.5" height="211.30000000000007" fill="#89a4e3"/>
<rect x="1549" y="979.5" width="119.5" height="191.70000000000005" fill="#89a4e3"/>
<rect x="1672.3" y="998.4" width="119.90000000000009" height="172.80000000000007" fill="#89a4e3"/>
<rect x="1796" y="1163.7" width="109.20000000000005" height="7.5" fill="#89a4e3"/>
<text transform="translate(1091.84 946.60) scale(1.2960 1)" font-family='"Liberation Serif", serif' font-size="13.94" fill="#8a8a8a" stroke="#8a8a8a" stroke-width="0.4" stroke-linejoin="round">1</text>
<text transform="translate(1100.70 950.05) scale(1.0374 1)" font-family='"Liberation Serif", serif' font-size="19.75" fill="#8a8a8a" stroke="#8a8a8a" stroke-width="0.4" stroke-linejoin="round">5</text>
<text transform="translate(1110.92 950.25) scale(0.8878 1)" font-family='"Liberation Serif", serif' font-size="19.98" fill="#8a8a8a" stroke="#8a8a8a" stroke-width="0.4" stroke-linejoin="round">4</text>
<text transform="translate(1119.95 946.46) scale(1.4239 1)" font-family='"Liberation Serif", serif' font-size="13.63" fill="#8a8a8a" stroke="#8a8a8a" stroke-width="0.4" stroke-linejoin="round">0</text>
<text transform="translate(1129.35 946.41) scale(1.0196 1)" font-family='"Liberation Serif", serif' font-size="19.03" fill="#8a8a8a" stroke="#8a8a8a" stroke-width="0.4" stroke-linejoin="round">8</text>
<text transform="translate(1094.90 1194.48) scale(1.5906 1)" font-family='"Liberation Serif", serif' font-size="13.81" fill="#555555" stroke="#555555" stroke-width="0.45" stroke-linejoin="round">2</text>
<text transform="translate(1105.15 1194.34) scale(1.5348 1)" font-family='"Liberation Serif", serif' font-size="13.56" fill="#555555" stroke="#555555" stroke-width="0.45" stroke-linejoin="round">0</text>
<text transform="translate(1115.10 1194.48) scale(1.5906 1)" font-family='"Liberation Serif", serif' font-size="13.81" fill="#555555" stroke="#555555" stroke-width="0.45" stroke-linejoin="round">2</text>
<text transform="translate(1125.35 1194.34) scale(1.5348 1)" font-family='"Liberation Serif", serif' font-size="13.56" fill="#555555" stroke="#555555" stroke-width="0.45" stroke-linejoin="round">0</text>
<text transform="translate(1216.04 943.90) scale(1.2960 1)" font-family='"Liberation Serif", serif' font-size="13.94" fill="#8a8a8a" stroke="#8a8a8a" stroke-width="0.4" stroke-linejoin="round">1</text>
<text transform="translate(1224.90 947.35) scale(1.0374 1)" font-family='"Liberation Serif", serif' font-size="19.75" fill="#8a8a8a" stroke="#8a8a8a" stroke-width="0.4" stroke-linejoin="round">5</text>
<text transform="translate(1234.30 947.35) scale(1.0374 1)" font-family='"Liberation Serif", serif' font-size="19.75" fill="#8a8a8a" stroke="#8a8a8a" stroke-width="0.4" stroke-linejoin="round">5</text>
<text transform="translate(1244.25 947.35) scale(0.9877 1)" font-family='"Liberation Serif", serif' font-size="19.53" fill="#8a8a8a" stroke="#8a8a8a" stroke-width="0.4" stroke-linejoin="round">9</text>
<text transform="translate(1253.46 943.71) scale(1.0099 1)" font-family='"Liberation Serif", serif' font-size="19.10" fill="#8a8a8a" stroke="#8a8a8a" stroke-width="0.4" stroke-linejoin="round">6</text>
<text transform="translate(1219.10 1194.48) scale(1.5906 1)" font-family='"Liberation Serif", serif' font-size="13.81" fill="#555555" stroke="#555555" stroke-width="0.45" stroke-linejoin="round">2</text>
<text transform="translate(1229.35 1194.34) scale(1.5348 1)" font-family='"Liberation Serif", serif' font-size="13.56" fill="#555555" stroke="#555555" stroke-width="0.45" stroke-linejoin="round">0</text>
<text transform="translate(1239.30 1194.48) scale(1.5906 1)" font-family='"Liberation Serif", serif' font-size="13.81" fill="#555555" stroke="#555555" stroke-width="0.45" stroke-linejoin="round">2</text>
<text transform="translate(1249.65 1194.48) scale(1.3960 1)" font-family='"Liberation Serif", serif' font-size="13.86" fill="#555555" stroke="#555555" stroke-width="0.45" stroke-linejoin="round">1</text>
<text transform="translate(1339.24 946.20) scale(1.2960 1)" font-family='"Liberation Serif", serif' font-size="13.94" fill="#8a8a8a" stroke="#8a8a8a" stroke-width="0.4" stroke-linejoin="round">1</text>
<text transform="translate(1348.10 949.65) scale(1.0374 1)" font-family='"Liberation Serif", serif' font-size="19.75" fill="#8a8a8a" stroke="#8a8a8a" stroke-width="0.4" stroke-linejoin="round">5</text>
<text transform="translate(1357.50 949.65) scale(1.0374 1)" font-family='"Liberation Serif", serif' font-size="19.75" fill="#8a8a8a" stroke="#8a8a8a" stroke-width="0.4" stroke-linejoin="round">5</text>
<text transform="translate(1367.35 946.06) scale(1.4239 1)" font-family='"Liberation Serif", serif' font-size="13.63" fill="#8a8a8a" stroke="#8a8a8a" stroke-width="0.4" stroke-linejoin="round">0</text>
<text transform="translate(1376.30 949.65) scale(1.0374 1)" font-family='"Liberation Serif", serif' font-size="19.75" fill="#8a8a8a" stroke="#8a8a8a" stroke-width="0.4" stroke-linejoin="round">5</text>
<text transform="translate(1342.30 1194.48) scale(1.5906 1)" font-family='"Liberation Serif", serif' font-size="13.81" fill="#555555" stroke="#555555" stroke-width="0.45" stroke-linejoin="round">2</text>
<text transform="translate(1352.55 1194.34) scale(1.5348 1)" font-family='"Liberation Serif", serif' font-size="13.56" fill="#555555" stroke="#555555" stroke-width="0.45" stroke-linejoin="round">0</text>
<text transform="translate(1362.50 1194.48) scale(1.5906 1)" font-family='"Liberation Serif", serif' font-size="13.81" fill="#555555" stroke="#555555" stroke-width="0.45" stroke-linejoin="round">2</text>
<text transform="translate(1372.60 1194.48) scale(1.5906 1)" font-family='"Liberation Serif", serif' font-size="13.81" fill="#555555" stroke="#555555" stroke-width="0.45" stroke-linejoin="round">2</text>
<text transform="translate(1461.74 948.60) scale(1.2960 1)" font-family='"Liberation Serif", serif' font-size="13.94" fill="#8a8a8a" stroke="#8a8a8a" stroke-width="0.4" stroke-linejoin="round">1</text>
<text transform="translate(1470.60 952.05) scale(1.0374 1)" font-family='"Liberation Serif", serif' font-size="19.75" fill="#8a8a8a" stroke="#8a8a8a" stroke-width="0.4" stroke-linejoin="round">5</text>
<text transform="translate(1480.23 952.05) scale(1.0237 1)" font-family='"Liberation Serif", serif' font-size="19.53" fill="#8a8a8a" stroke="#8a8a8a" stroke-width="0.4" stroke-linejoin="round">3</text>
<text transform="translate(1490.22 952.25) scale(0.8878 1)" font-family='"Liberation Serif", serif' font-size="19.98" fill="#8a8a8a" stroke="#8a8a8a" stroke-width="0.4" stroke-linejoin="round">4</text>
<text transform="translate(1499.62 952.25) scale(0.8878 1)" font-family='"Liberation Serif", serif' font-size="19.98" fill="#8a8a8a" stroke="#8a8a8a" stroke-width="0.4" stroke-linejoin="round">4</text>
<text transform="translate(1464.80 1194.48) scale(1.5906 1)" font-family='"Liberation Serif", serif' font-size="13.81" fill="#555555" stroke="#555555" stroke-width="0.45" stroke-linejoin="round">2</text>
<text transform="translate(1475.05 1194.34) scale(1.5348 1)" font-family='"Liberation Serif", serif' font-size="13.56" fill="#555555" stroke="#555555" stroke-width="0.45" stroke-linejoin="round">0</text>
<text transform="translate(1485.00 1194.48) scale(1.5906 1)" font-family='"Liberation Serif", serif' font-size="13.81" fill="#555555" stroke="#555555" stroke-width="0.45" stroke-linejoin="round">2</text>
<text transform="translate(1495.01 1197.93) scale(1.1016 1)" font-family='"Liberation Serif", serif' font-size="19.46" fill="#555555" stroke="#555555" stroke-width="0.45" stroke-linejoin="round">3</text>
<text transform="translate(1585.44 967.70) scale(1.2960 1)" font-family='"Liberation Serif", serif' font-size="13.94" fill="#8a8a8a" stroke="#8a8a8a" stroke-width="0.4" stroke-linejoin="round">1</text>
<text transform="translate(1594.53 971.15) scale(1.0237 1)" font-family='"Liberation Serif", serif' font-size="19.53" fill="#8a8a8a" stroke="#8a8a8a" stroke-width="0.4" stroke-linejoin="round">3</text>
<text transform="translate(1604.25 971.15) scale(0.9877 1)" font-family='"Liberation Serif", serif' font-size="19.53" fill="#8a8a8a" stroke="#8a8a8a" stroke-width="0.4" stroke-linejoin="round">9</text>
<text transform="translate(1613.64 967.70) scale(1.2960 1)" font-family='"Liberation Serif", serif' font-size="13.94" fill="#8a8a8a" stroke="#8a8a8a" stroke-width="0.4" stroke-linejoin="round">1</text>
<text transform="translate(1622.50 971.15) scale(1.0374 1)" font-family='"Liberation Serif", serif' font-size="19.75" fill="#8a8a8a" stroke="#8a8a8a" stroke-width="0.4" stroke-linejoin="round">5</text>
<text transform="translate(1588.50 1194.48) scale(1.5906 1)" font-family='"Liberation Serif", serif' font-size="13.81" fill="#555555" stroke="#555555" stroke-width="0.45" stroke-linejoin="round">2</text>
<text transform="translate(1598.75 1194.34) scale(1.5348 1)" font-family='"Liberation Serif", serif' font-size="13.56" fill="#555555" stroke="#555555" stroke-width="0.45" stroke-linejoin="round">0</text>
<text transform="translate(1608.70 1194.48) scale(1.5906 1)" font-family='"Liberation Serif", serif' font-size="13.81" fill="#555555" stroke="#555555" stroke-width="0.45" stroke-linejoin="round">2</text>
<text transform="translate(1619.35 1198.12) scale(0.9554 1)" font-family='"Liberation Serif", serif' font-size="19.90" fill="#555555" stroke="#555555" stroke-width="0.45" stroke-linejoin="round">4</text>
<text transform="translate(1708.94 986.50) scale(1.2960 1)" font-family='"Liberation Serif", serif' font-size="13.94" fill="#8a8a8a" stroke="#8a8a8a" stroke-width="0.4" stroke-linejoin="round">1</text>
<text transform="translate(1718.11 986.50) scale(1.4756 1)" font-family='"Liberation Serif", serif' font-size="13.89" fill="#8a8a8a" stroke="#8a8a8a" stroke-width="0.4" stroke-linejoin="round">2</text>
<text transform="translate(1727.20 989.95) scale(1.0374 1)" font-family='"Liberation Serif", serif' font-size="19.75" fill="#8a8a8a" stroke="#8a8a8a" stroke-width="0.4" stroke-linejoin="round">5</text>
<text transform="translate(1736.60 989.95) scale(1.0374 1)" font-family='"Liberation Serif", serif' font-size="19.75" fill="#8a8a8a" stroke="#8a8a8a" stroke-width="0.4" stroke-linejoin="round">5</text>
<text transform="translate(1746.54 986.50) scale(1.2960 1)" font-family='"Liberation Serif", serif' font-size="13.94" fill="#8a8a8a" stroke="#8a8a8a" stroke-width="0.4" stroke-linejoin="round">1</text>
<text transform="translate(1712.00 1194.48) scale(1.5906 1)" font-family='"Liberation Serif", serif' font-size="13.81" fill="#555555" stroke="#555555" stroke-width="0.45" stroke-linejoin="round">2</text>
<text transform="translate(1722.25 1194.34) scale(1.5348 1)" font-family='"Liberation Serif", serif' font-size="13.56" fill="#555555" stroke="#555555" stroke-width="0.45" stroke-linejoin="round">0</text>
<text transform="translate(1732.20 1194.48) scale(1.5906 1)" font-family='"Liberation Serif", serif' font-size="13.81" fill="#555555" stroke="#555555" stroke-width="0.45" stroke-linejoin="round">2</text>
<text transform="translate(1741.97 1197.93) scale(1.1163 1)" font-family='"Liberation Serif", serif' font-size="19.68" fill="#555555" stroke="#555555" stroke-width="0.45" stroke-linejoin="round">5</text>
<text transform="translate(1841.14 1154.15) scale(1.0490 1)" font-family='"Liberation Serif", serif' font-size="19.75" fill="#8a8a8a" stroke="#8a8a8a" stroke-width="0.4" stroke-linejoin="round">5</text>
<text transform="translate(1850.95 1150.70) scale(1.4921 1)" font-family='"Liberation Serif", serif' font-size="13.89" fill="#8a8a8a" stroke="#8a8a8a" stroke-width="0.4" stroke-linejoin="round">2</text>
<text transform="translate(1860.59 1150.51) scale(1.0310 1)" font-family='"Liberation Serif", serif' font-size="19.03" fill="#8a8a8a" stroke="#8a8a8a" stroke-width="0.4" stroke-linejoin="round">8</text>
<text transform="translate(1835.50 1194.48) scale(1.5906 1)" font-family='"Liberation Serif", serif' font-size="13.81" fill="#555555" stroke="#555555" stroke-width="0.45" stroke-linejoin="round">2</text>
<text transform="translate(1845.75 1194.34) scale(1.5348 1)" font-family='"Liberation Serif", serif' font-size="13.56" fill="#555555" stroke="#555555" stroke-width="0.45" stroke-linejoin="round">0</text>
<text transform="translate(1855.70 1194.48) scale(1.5906 1)" font-family='"Liberation Serif", serif' font-size="13.81" fill="#555555" stroke="#555555" stroke-width="0.45" stroke-linejoin="round">2</text>
<text transform="translate(1865.85 1194.28) scale(1.0868 1)" font-family='"Liberation Serif", serif' font-size="19.03" fill="#555555" stroke="#555555" stroke-width="0.45" stroke-linejoin="round">6</text>
<rect x="1913" y="160" width="200" height="1172" fill="#ffffff"/>
<path d="M1924.5 172.5 H1941 L1935 180 V186.5 L1930.5 184 V180 Z" fill="none" stroke="#252423" stroke-width="1.4" stroke-linejoin="round"/>
<text x="1949.7" y="185.0" font-family='"Liberation Sans", sans-serif' font-size="16" fill="#252423" font-weight="bold" textLength="42.7" lengthAdjust="spacingAndGlyphs">Filters</text>
<path d="M2060 181 Q2066.5 172 2073 181" fill="none" stroke="#252423" stroke-width="1.3"/>
<circle cx="2066.5" cy="179.5" r="1.8" fill="none" stroke="#252423" stroke-width="1.2"/>
<path d="M2091.5 173.5 L2097 179.5 L2091.5 185.5 M2097 173.5 L2102.5 179.5 L2097 185.5" fill="none" stroke="#252423" stroke-width="1.2"/>
<rect x="1921.5" y="205.5" width="179" height="29.5" fill="#ffffff" stroke="#a19f9d" stroke-width="1" rx="2"/>
<circle cx="1941.5" cy="217.2" r="4.8" fill="none" stroke="#252423" stroke-width="1.1"/>
<line x1="1938" y1="220.8" x2="1932.5" y2="226" stroke="#252423" stroke-width="1.2"/>
<text x="1961.2" y="225.0" font-family='"Liberation Sans", sans-serif' font-size="13" fill="#252423" textLength="38.8" lengthAdjust="spacingAndGlyphs">Search</text>
<line x1="1913" y1="240.5" x2="2113" y2="240.5" stroke="#c8c6c4" stroke-width="1"/>
<text x="1921.7" y="270.0" font-family='"Liberation Sans", sans-serif' font-size="11.8" fill="#252423" textLength="99.5" lengthAdjust="spacingAndGlyphs">Filters on this page</text>
<circle cx="2090.5" cy="268" r="0.9" fill="#252423"/>
<circle cx="2090.5" cy="365" r="0.9" fill="#252423"/>
<circle cx="2095" cy="268" r="0.9" fill="#252423"/>
<circle cx="2095" cy="365" r="0.9" fill="#252423"/>
<circle cx="2099.5" cy="268" r="0.9" fill="#252423"/>
<circle cx="2099.5" cy="365" r="0.9" fill="#252423"/>
<rect x="1921.5" y="282.5" width="183" height="45" fill="#ffffff" stroke="#c8c6c4" stroke-width="1" rx="2"/>
<text x="1960.0" y="309.7" font-family='"Liberation Sans", sans-serif' font-size="11.8" fill="#252423" textLength="106.4" lengthAdjust="spacingAndGlyphs">Add data fields here</text>
<text x="1921.7" y="367.0" font-family='"Liberation Sans", sans-serif' font-size="11.8" fill="#252423" textLength="97.5" lengthAdjust="spacingAndGlyphs">Filters on all pages</text>
<rect x="1921.5" y="379.5" width="183" height="45" fill="#ffffff" stroke="#c8c6c4" stroke-width="1" rx="2"/>
<text x="1960.0" y="406.6" font-family='"Liberation Sans", sans-serif' font-size="11.8" fill="#252423" textLength="106.4" lengthAdjust="spacingAndGlyphs">Add data fields here</text>
<rect x="2113" y="160" width="267" height="1207" fill="#f3f2f1"/>
<line x1="2113.5" y1="160" x2="2113.5" y2="1367" stroke="#e1dfdd" stroke-width="1"/>
<line x1="2380.5" y1="160" x2="2380.5" y2="1367" stroke="#e1dfdd" stroke-width="1"/>
<text x="2122.6" y="184.5" font-family='"Liberation Sans", sans-serif' font-size="15.5" fill="#252423" font-weight="bold" textLength="98.0" lengthAdjust="spacingAndGlyphs">Visualizations</text>
<path d="M2358.5 173.5 L2364 179.5 L2358.5 185.5 M2364 173.5 L2369.5 179.5 L2364 185.5" fill="none" stroke="#252423" stroke-width="1.2"/>
<path d="M2388.5 173.5 L2394 179.5 L2388.5 185.5 M2394 173.5 L2399.5 179.5 L2394 185.5" fill="none" stroke="#a19f9d" stroke-width="0"/>
<text x="2122.6" y="209.9" font-family='"Liberation Sans", sans-serif' font-size="12.2" fill="#252423" font-weight="bold" textLength="60.8" lengthAdjust="spacingAndGlyphs">Build visual</text>
<rect x="2122.2" y="217.2" width="31.5" height="31" fill="#d6d4d2" rx="1"/>
<line x1="2126" y1="221.5" x2="2145" y2="221.5" stroke="#252423" stroke-width="1.2"/>
<rect x="2126" y="226" width="24" height="7.5" fill="#117865" stroke="#1b1b1b" stroke-width="1" stroke-dasharray="1.5 1"/>
<rect x="2126" y="237" width="24" height="7.5" fill="#117865" stroke="#1b1b1b" stroke-width="1" stroke-dasharray="1.5 1"/>
<path d="M2192.5 221.5 H2202 L2206.5 226 V229 M2197.5 244.5 H2192.5 V221.5 M2202 221.5 V226 H2206.5" fill="none" stroke="#252423" stroke-width="1.2"/>
<path d="M2199 242 L2214 228 Q2216 227 2215.5 229 L2201.5 243.5 Q2199 245 2197 244.5 Q2199 243.5 2199 242 Z" fill="none" stroke="#252423" stroke-width="1.1"/>
<path d="M2113 261.2 H2129.7 L2137.8 253.9 L2146.4 261.2 H2380" fill="none" stroke="#8a8886" stroke-width="1"/>
<path d="M2125.5 273.5 V291.5 H2143.5" fill="none" stroke="#252423" stroke-width="1"/>
<rect x="2126.5" y="275.5" width="5" height="4" fill="#8cb8ec" stroke="#1f78d1" stroke-width="0.8"/>
<rect x="2126.5" y="281.5" width="11" height="4" fill="#c8c6c4" stroke="#8a8886" stroke-width="0.8"/>
<rect x="2126.5" y="286.5" width="8" height="4" fill="none" stroke="#252423" stroke-width="0.8"/>
<path d="M2153.5 273.5 V291.5 H2171.5" fill="none" stroke="#252423" stroke-width="1"/>
<rect x="2156.5" y="279.5" width="3.5" height="11" fill="#8cb8ec" stroke="#1f78d1" stroke-width="0.8"/>
<rect x="2160.5" y="282.5" width="3.5" height="8" fill="none" stroke="#252423" stroke-width="0.8"/>
<rect x="2165.5" y="276.5" width="3.5" height="14" fill="#c8c6c4" stroke="#8a8886" stroke-width="0.8"/>
<path d="M2181.5 273.5 V291.5 H2199.5" fill="none" stroke="#252423" stroke-width="1"/>
<rect x="2182.5" y="274.5" width="16" height="3.5" fill="#1f78d1"/>
<rect x="2182.5" y="280.5" width="10" height="3.5" fill="#c8c6c4" stroke="#8a8886" stroke-width="0.6"/>
<rect x="2182.5" y="285.5" width="13" height="3.5" fill="none" stroke="#252423" stroke-width="0.8"/>
<path d="M2209.5 273.5 V291.5 H2227.5" fill="none" stroke="#252423" stroke-width="1"/>
<rect x="2210.5" y="274.5" width="4" height="16" fill="#1f78d1"/>
<rect x="2215.5" y="281.5" width="3.5" height="9" fill="none" stroke="#252423" stroke-width="0.8"/>
<rect x="2220.5" y="278.5" width="3.5" height="12" fill="#c8c6c4" stroke="#8a8886" stroke-width="0.6"/>
<path d="M2237.5 273.5 V291.5 H2255.5" fill="none" stroke="#252423" stroke-width="1"/>
<rect x="2238.5" y="275.5" width="14" height="4" fill="#8cb8ec" stroke="#1f78d1" stroke-width="0.8"/>
<rect x="2238.5" y="281.5" width="10" height="4" fill="none" stroke="#252423" stroke-width="0.8"/>
<rect x="2238.5" y="286.5" width="16" height="4" fill="#c8c6c4" stroke="#8a8886" stroke-width="0.6"/>
<path d="M2265.5 273.5 V291.5 H2283.5" fill="none" stroke="#252423" stroke-width="1"/>
<rect x="2267.5" y="274.5" width="3.5" height="16" fill="#8cb8ec" stroke="#1f78d1" stroke-width="0.8"/>
<rect x="2272.5" y="278.5" width="3.5" height="12" fill="none" stroke="#252423" stroke-width="0.8"/>
<rect x="2277.5" y="276.5" width="3.5" height="14" fill="#c8c6c4" stroke="#8a8886" stroke-width="0.6"/>
<path d="M2293.5 273.5 V291.5 H2311.5" fill="none" stroke="#252423" stroke-width="1"/>
<path d="M2293.5 287.5 L2299.5 280.5 L2304.5 283.5 L2311.5 276.5" fill="none" stroke="#252423" stroke-width="1"/>
<path d="M2293.5 283.5 L2298.5 278.5 L2304.5 280.5 L2311.5 274.5" fill="none" stroke="#1f78d1" stroke-width="1"/>
<path d="M2321.5 291.5 L2327.5 278.5 L2331.5 284.5 L2335.5 275.5 L2339.5 291.5 Z" fill="#c8c6c4" stroke="#8a8886" stroke-width="0.8"/>
<path d="M2321.5 291.5 L2327.5 281.5 L2334.5 291.5 Z" fill="#8cb8ec" stroke="#1f78d1" stroke-width="0.8"/>
<path d="M2349.5 273.5 V291.5 H2367.5" fill="none" stroke="#252423" stroke-width="1"/>
<path d="M2349.5 279.5 L2354.5 275.5 L2359.5 281.5 L2367.5 276.5 V283.5 L2359.5 286.5 L2349.5 283.5 Z" fill="#8cb8ec" stroke="#1f78d1" stroke-width="0.9"/>
<path d="M2125.5 302.5 H2143.5 V319.5 H2125.5 Z" fill="none" stroke="#252423" stroke-width="1"/>
<path d="M2125.5 303.5 L2134.5 313.5 L2143.5 303.5 Z" fill="#8cb8ec" stroke="#1f78d1" stroke-width="0.9"/>
<path d="M2153.5 301.5 V319.5 H2171.5" fill="none" stroke="#252423" stroke-width="1"/>
<rect x="2156.5" y="307.5" width="3.5" height="11" fill="#8cb8ec" stroke="#1f78d1" stroke-width="0.7"/>
<rect x="2161.5" y="304.5" width="3.5" height="14" fill="none" stroke="#252423" stroke-width="0.7"/>
<rect x="2165.5" y="306.5" width="3.5" height="12" fill="#c8c6c4" stroke="#8a8886" stroke-width="0.6"/>
<path d="M2153.5 316.5 L2159.5 310.5 L2164.5 314.5 L2171.5 306.5" fill="none" stroke="#252423" stroke-width="0.9"/>
<path d="M2181.5 301.5 V319.5 H2199.5" fill="none" stroke="#252423" stroke-width="1"/>
<rect x="2184.5" y="307.5" width="3.5" height="11" fill="#8cb8ec" stroke="#1f78d1" stroke-width="0.7"/>
<rect x="2189.5" y="304.5" width="3.5" height="14" fill="none" stroke="#252423" stroke-width="0.7"/>
<rect x="2193.5" y="306.5" width="3.5" height="12" fill="#c8c6c4" stroke="#8a8886" stroke-width="0.6"/>
<path d="M2181.5 316.5 L2187.5 310.5 L2192.5 314.5 L2199.5 306.5" fill="none" stroke="#252423" stroke-width="0.9"/>
<path d="M2209.5 301.5 V319.5 H2227.5" fill="none" stroke="#252423" stroke-width="1"/>
<path d="M2210.5 304.5 Q2218.5 313.5 2226.5 304.5 V315.5 Q2218.5 309.5 2210.5 315.5 Z" fill="#8cb8ec" stroke="#1f78d1" stroke-width="0.9"/>
<rect x="2212.5" y="309.5" width="3" height="3" fill="#e8730c"/>
<rect x="2221.5" y="310.5" width="4" height="3" fill="#e8730c"/>
<path d="M2237.5 301.5 V319.5 H2255.5" fill="none" stroke="#252423" stroke-width="1"/>
<path d="M2240.5 319.5 V309.5 H2244.5 V314.5 H2247.5 V304.5 H2251.5 V319.5" fill="none" stroke="#252423" stroke-width="1"/>
<path d="M2265.5 303.5 H2283.5 L2280.5 309.5 H2268.5 Z" fill="#1f78d1"/>
<rect x="2270.5" y="311.5" width="8" height="4" fill="#1f78d1"/>
<rect x="2272.0" y="316.5" width="5" height="3" fill="#1f78d1"/>
<path d="M2293.5 301.5 V319.5 H2311.5" fill="none" stroke="#252423" stroke-width="1"/>
<rect x="2296.5" y="313.5" width="2.2" height="2.2" fill="#1f78d1"/>
<rect x="2300.5" y="309.5" width="2.2" height="2.2" fill="#8cb8ec"/>
<rect x="2304.5" y="305.5" width="2.2" height="2.2" fill="#252423"/>
<rect x="2307.5" y="313.5" width="2.2" height="2.2" fill="#1f78d1"/>
<rect x="2299.5" y="315.5" width="2.2" height="2.2" fill="#252423"/>
<rect x="2308.5" y="308.5" width="2.2" height="2.2" fill="#8cb8ec"/>
<circle cx="2330" cy="310" r="8.5" fill="#ffffff" stroke="#252423" stroke-width="1.1"/>
<path d="M2330 301.5 A8.5 8.5 0 0 1 2336 316 L2330 310 Z" fill="#8cb8ec" stroke="#1f78d1" stroke-width="0.9"/>
<circle cx="2358" cy="310" r="7" fill="none" stroke="#1f78d1" stroke-width="3.5"/>
<circle cx="2358" cy="310" r="7" fill="none" stroke="#8cb8ec" stroke-width="2"/>
<rect x="2125.5" y="330.5" width="18" height="17" fill="none" stroke="#252423" stroke-width="1"/>
<rect x="2126.0" y="331.0" width="7" height="16" fill="#8cb8ec" stroke="#1f78d1" stroke-width="0.9"/>
<path d="M2132.5 338.5 H2143.5 M2137.5 338.5 V347.5" fill="none" stroke="#252423" stroke-width="1"/>
<circle cx="2162" cy="337" r="7" fill="#ffffff" stroke="#252423" stroke-width="1.1"/>
<path d="M2158 333 Q2162 336 2165 332 Q2167 338 2163 342 Q2158 340 2158 333 Z" fill="#2a9a3d"/>
<path d="M2157 346 H2167" fill="none" stroke="#252423" stroke-width="1"/>
<path d="M2182.5 333.5 L2189.5 331.5 L2198.5 332.5 V341.5 L2191.5 346.5 L2184.5 343.5 Z" fill="#c8c6c4" stroke="#252423" stroke-width="1"/>
<path d="M2191.5 335.5 L2198.5 333.5 V341.5 L2191.5 346.5 Z" fill="#8cb8ec" stroke="#1f78d1" stroke-width="0.8"/>
<path d="M2218 328 L2225 347 L2218 342 L2211 347 Z" fill="#2f8ad8"/>
<path d="M2237.5 343.5 A9 9 0 0 1 2255.5 343.5 H2251.5 A5 5 0 0 0 2241.5 343.5 Z" fill="#8cb8ec" stroke="#1f78d1" stroke-width="1"/>
<path d="M2246 343 L2242 336" fill="none" stroke="#252423" stroke-width="1.6"/>
<rect x="2265.5" y="331.5" width="18" height="14" fill="none" stroke="#252423" stroke-width="1"/>
<text x="2274.0" y="341.5" font-family='"Liberation Sans", sans-serif' font-size="9" fill="#1f78d1" text-anchor="middle" textLength="14.0" lengthAdjust="spacingAndGlyphs">123</text>
<rect x="2293.5" y="330.5" width="18" height="17" fill="none" stroke="#252423" stroke-width="1"/>
<path d="M2297.5 334.5 V343.5 M2299.5 335.5 H2308.5 M2299.5 339.5 H2306.5 M2299.5 342.5 H2304.5" fill="none" stroke="#1f78d1" stroke-width="1.3"/>
<rect x="2321.5" y="331.5" width="18" height="14" fill="none" stroke="#252423" stroke-width="1"/>
<path d="M2324.5 339.5 L2327.5 334.5 L2330.5 339.5 Z" fill="#2a9a3d"/>
<path d="M2331.5 334.5 H2337.5 L2334.5 339.5 Z" fill="#d13438"/>
<line x1="2324.5" y1="342.5" x2="2336.5" y2="342.5" stroke="#252423" stroke-width="0.8"/>
<rect x="2349.5" y="330.5" width="18" height="17" fill="none" stroke="#252423" stroke-width="1"/>
<line x1="2349.5" y1="333.5" x2="2367.5" y2="333.5" stroke="#252423" stroke-width="1"/>
<rect x="2352.5" y="336.5" width="3" height="3" fill="none" stroke="#252423" stroke-width="0.8"/>
<rect x="2352.5" y="341.5" width="3" height="3" fill="none" stroke="#252423" stroke-width="0.8"/>
<path d="M2358.5 338.5 H2368.5 L2364.5 342.5 V347.5 L2362.5 346.5 V342.5 Z" fill="#f3f2f1" stroke="#252423" stroke-width="1"/>
<rect x="2125.5" y="358.5" width="18" height="17" fill="#ffffff" stroke="#252423" stroke-width="1"/>
<rect x="2126.0" y="359.0" width="17" height="3" fill="#c8c6c4"/>
<path d="M2125.5 364.0 H2143.5 M2125.5 369.5 H2143.5 M2131.5 358.5 V375.5 M2137.5 358.5 V375.5" fill="none" stroke="#252423" stroke-width="0.9"/>
<rect x="2153.5" y="358.5" width="18" height="17" fill="#8cb8ec" stroke="#252423" stroke-width="1"/>
<rect x="2154.0" y="359.0" width="17" height="4.5" fill="#c8c6c4"/>
<path d="M2153.5 364.0 H2171.5 M2153.5 369.5 H2171.5 M2159.5 358.5 V375.5 M2165.5 358.5 V375.5" fill="none" stroke="#ffffff" stroke-width="1"/>
<text x="2190.0" y="372.0" font-family='"Liberation Sans", sans-serif' font-size="16" fill="#1f78d1" font-weight="bold" text-anchor="middle" textLength="10.0" lengthAdjust="spacingAndGlyphs">R</text>
<text x="2218.0" y="371.0" font-family='"Liberation Sans", sans-serif' font-size="16" fill="#1f78d1" font-weight="bold" text-anchor="middle" textLength="18.0" lengthAdjust="spacingAndGlyphs">Py</text>
<path d="M2237.5 357.5 V375.5 H2255.5" fill="none" stroke="#252423" stroke-width="1"/>
<path d="M2239.5 361.5 H2251.5 M2239.5 366.5 H2247.5 M2239.5 371.5 H2243.5" fill="none" stroke="#252423" stroke-width="0.8"/>
<circle cx="2252.5" cy="360.5" r="2.3" fill="#8cb8ec" stroke="#1f78d1" stroke-width="0.8"/>
<rect x="2246.5" y="364.5" width="3" height="3" fill="#c8c6c4" stroke="#252423" stroke-width="0.6"/>
<rect x="2242.5" y="369.5" width="3" height="3" fill="#c8c6c4" stroke="#252423" stroke-width="0.6"/>
<rect x="2265.5" y="364.5" width="6" height="4" fill="#8cb8ec" stroke="#1f78d1" stroke-width="0.9"/>
<rect x="2276.5" y="358.5" width="7" height="4" fill="#8cb8ec" stroke="#1f78d1" stroke-width="0.9"/>
<rect x="2276.5" y="364.5" width="7" height="4" fill="#8cb8ec" stroke="#1f78d1" stroke-width="0.9"/>
<rect x="2276.5" y="370.5" width="7" height="4" fill="#8cb8ec" stroke="#1f78d1" stroke-width="0.9"/>
<path d="M2271.5 366.5 H2274.5 V360.5 H2276.5 M2274.5 372.5 H2276.5 M2274.5 366.5 V372.5" fill="none" stroke="#1f78d1" stroke-width="0.9"/>
<path d="M2293.5 359.5 H2311.5 V370.5 H2300.5 L2296.5 374.5 V370.5 H2293.5 Z" fill="#ffffff" stroke="#1f78d1" stroke-width="1.1"/>
<path d="M2323.5 357.5 H2332.5 L2337.5 362.5 V375.5 H2323.5 Z" fill="none" stroke="#252423" stroke-width="1"/>
<circle cx="2326.5" cy="364.5" r="1.3" fill="#1f78d1"/>
<path d="M2328.5 367.5 H2334.5 M2326.5 370.5 H2332.5" fill="none" stroke="#1f78d1" stroke-width="1"/>
<path d="M2352.5 358.5 H2364.5 V364.5 Q2364.5 369.5 2358.5 369.5 Q2352.5 369.5 2352.5 364.5 Z" fill="#ffffff" stroke="#252423" stroke-width="1.1"/>
<path d="M2352.5 360.5 H2349.5 Q2349.5 365.5 2353.5 365.5 M2364.5 360.5 H2367.5 Q2367.5 365.5 2363.5 365.5" fill="none" stroke="#252423" stroke-width="1"/>
<path d="M2358.5 369.5 V372.5 M2354.5 374.5 H2362.5" fill="none" stroke="#1f78d1" stroke-width="2"/>
<path d="M2126.5 385.5 H2136.5 L2141.5 390.5 V403.5 H2126.5 Z" fill="none" stroke="#252423" stroke-width="1"/>
<rect x="2129.5" y="397.5" width="2.3" height="4" fill="#252423"/>
<rect x="2133.5" y="394.5" width="2.3" height="7" fill="#252423"/>
<rect x="2137.5" y="396.5" width="2.3" height="5" fill="#252423"/>
<rect x="2155.5" y="389.5" width="16" height="13" fill="none" stroke="#252423" stroke-width="1"/>
<text x="2164.0" y="399.0" font-family='"Liberation Sans", sans-serif' font-size="8.5" fill="#1f78d1" text-anchor="middle" textLength="13.0" lengthAdjust="spacingAndGlyphs">123</text>
<path d="M2155.5 385.5 H2160.5 L2157.5 390.5 H2160.5 L2153.5 397.5 L2155.5 391.5 H2153.5 Z" fill="#f7a823" stroke="#e8730c" stroke-width="0.6"/>
<rect x="2183.5" y="389.5" width="16" height="13" fill="none" stroke="#252423" stroke-width="1"/>
<path d="M2190.5 394.5 H2200.5 L2196.5 398.5 V403.5 L2194.5 402.5 V398.5 Z" fill="#f3f2f1" stroke="#252423" stroke-width="1"/>
<path d="M2183.5 385.5 H2188.5 L2185.5 390.5 H2188.5 L2181.5 397.5 L2183.5 391.5 H2181.5 Z" fill="#f7a823" stroke="#e8730c" stroke-width="0.6"/>
<rect x="2210.5" y="388.5" width="17" height="15" fill="none" stroke="#1f78d1" stroke-width="1.2"/>
<path d="M2210.5 393.5 H2217.5 V398.5 H2222.5 V403.5" fill="none" stroke="#252423" stroke-width="1"/>
<path d="M2209.5 385.5 H2214.5 V391.5 L2212.0 394.5 L2209.5 391.5 Z" fill="#e8730c"/>
<circle cx="2224.5" cy="401.5" r="2.3" fill="#e8730c"/>
<path d="M2246 385 L2255 394 L2246 403 L2237 394 Z" fill="none" stroke="#9b3fc4" stroke-width="1.3"/>
<path d="M2246 390 L2250 394 L2246 398 L2242 394 Z" fill="none" stroke="#9b3fc4" stroke-width="1.2"/>
<path d="M2265.5 387.5 H2275.5 L2283.5 394.5 L2275.5 402.5 H2265.5 L2273.5 394.5 Z" fill="#ffffff" stroke="#1f78d1" stroke-width="1.2"/>
<line x1="2269.5" y1="401.5" x2="2279.5" y2="390.5" stroke="#1f78d1" stroke-width="1"/>
<circle cx="2297" cy="394" r="1.1" fill="#252423"/>
<circle cx="2302" cy="394" r="1.1" fill="#252423"/>
<circle cx="2307" cy="394" r="1.1" fill="#252423"/>
<line x1="2113" y1="412.5" x2="2380" y2="412.5" stroke="#e1dfdd" stroke-width="1"/>
<text x="2126.4" y="434.0" font-family='"Liberation Sans", sans-serif' font-size="11.8" fill="#252423" textLength="33.2" lengthAdjust="spacingAndGlyphs">Values</text>
<rect x="2118.5" y="443.5" width="254" height="27" fill="#ffffff" stroke="#a19f9d" stroke-width="1" stroke-dasharray="3 2"/>
<text x="2129.6" y="461.3" font-family='"Liberation Sans", sans-serif' font-size="11.8" fill="#252423" textLength="105.8" lengthAdjust="spacingAndGlyphs">Add data fields here</text>
<text x="2126.4" y="493.7" font-family='"Liberation Sans", sans-serif' font-size="12.2" fill="#252423" font-weight="bold" textLength="68.7" lengthAdjust="spacingAndGlyphs">Drill through</text>
<text x="2126.4" y="518.6" font-family='"Liberation Sans", sans-serif' font-size="11.8" fill="#252423" textLength="65.6" lengthAdjust="spacingAndGlyphs">Cross-report</text>
<rect x="2325.5" y="507.6" width="31.5" height="14.8" fill="#ffffff" stroke="#605e5c" stroke-width="1" rx="7.4"/>
<circle cx="2334" cy="515" r="3.8" fill="#444444"/>
<text x="2339.5" y="519.0" font-family='"Liberation Sans", sans-serif' font-size="9.5" fill="#605e5c" textLength="14.0" lengthAdjust="spacingAndGlyphs">Off</text>
<text x="2126.4" y="545.8" font-family='"Liberation Sans", sans-serif' font-size="11.8" fill="#252423" textLength="73.4" lengthAdjust="spacingAndGlyphs">Keep all filters</text>
<rect x="2325.5" y="534.4" width="31.5" height="15.3" fill="#117865" rx="7.6"/>
<circle cx="2348.3" cy="542" r="4" fill="#ffffff"/>
<text x="2328.7" y="546.0" font-family='"Liberation Sans", sans-serif' font-size="9.5" fill="#ffffff" font-weight="bold" textLength="12.5" lengthAdjust="spacingAndGlyphs">On</text>
<rect x="2118.5" y="560.5" width="254" height="55.5" fill="#ffffff" stroke="#a19f9d" stroke-width="1" stroke-dasharray="3 2"/>
<rect x="2121.5" y="563.5" width="248" height="42" fill="#f9f9f9" stroke="#e1dfdd" stroke-width="1"/>
<text x="2130.4" y="578.6" font-family='"Liberation Sans", sans-serif' font-size="11.8" fill="#252423" textLength="65.5" lengthAdjust="spacingAndGlyphs">mmwr_week</text>
<text x="2130.4" y="597.1" font-family='"Liberation Sans", sans-serif' font-size="11.8" fill="#252423" textLength="31.6" lengthAdjust="spacingAndGlyphs">is (All)</text>
<path d="M2311 573 L2317 579 L2323 573" fill="none" stroke="#252423" stroke-width="1"/>
<path d="M2333 572 L2341 580 M2341 572 L2333 580" fill="none" stroke="#252423" stroke-width="1"/>
<rect x="2352.5" y="577" width="9" height="6" fill="none" stroke="#252423" stroke-width="1.1"/>
<path d="M2354.5 577 V573.8 Q2354.5 571.2 2357 571.2 Q2359.5 571.2 2359.5 573.8 V577" fill="none" stroke="#252423" stroke-width="1.1"/>
<rect x="2381" y="160" width="178" height="1207" fill="#f3f2f1"/>
<text x="2388.8" y="184.6" font-family='"Liberation Sans", sans-serif' font-size="15.5" fill="#252423" font-weight="bold" textLength="32.4" lengthAdjust="spacingAndGlyphs">Data</text>
<path d="M2540 173.5 L2545.5 179.5 L2540 185.5 M2545.5 173.5 L2551 179.5 L2545.5 185.5" fill="none" stroke="#252423" stroke-width="1.2"/>
<rect x="2384.5" y="205.7" width="171" height="22.6" fill="#ffffff" stroke="#e1dfdd" stroke-width="1" rx="3"/>
<line x1="2386" y1="228.2" x2="2554" y2="228.2" stroke="#8a8886" stroke-width="1.2"/>
<circle cx="2403" cy="215.8" r="5" fill="none" stroke="#252423" stroke-width="1"/>
<line x1="2406.5" y1="219.5" x2="2410.6" y2="223.3" stroke="#252423" stroke-width="1.1"/>
<text x="2418.7" y="221.3" font-family='"Liberation Sans", sans-serif' font-size="12.5" fill="#605e5c" textLength="40.2" lengthAdjust="spacingAndGlyphs">Search</text>
<path d="M2394 248 L2399.2 253 L2404.4 248" fill="none" stroke="#605e5c" stroke-width="1"/>
<rect x="2409.5" y="244.5" width="11" height="11" fill="none" stroke="#252423" stroke-width="1.1" rx="2"/>
<path d="M2409.5 248.2 H2420.5 M2409.5 251.8 H2420.5 M2413.2 244.5 V255.5 M2416.8 244.5 V255.5" fill="none" stroke="#252423" stroke-width="0.9"/>
<text x="2427.7" y="254.5" font-family='"Liberation Sans", sans-serif' font-size="11.8" fill="#252423" textLength="37.2" lengthAdjust="spacingAndGlyphs">oregon</text>
<rect x="2424.5" y="268.5" width="11" height="11" fill="#f7f6f5" stroke="#8a8886" stroke-width="1" rx="1"/>
<rect x="2444.5" y="267.7" width="11" height="12.8" fill="none" stroke="#252423" stroke-width="1.1" rx="2"/>
<rect x="2446.8" y="269.8" width="6.4" height="2.4" fill="none" stroke="#252423" stroke-width="0.8"/>
<rect x="2446.6" y="274.5" width="1.5" height="1.5" fill="#252423"/>
<rect x="2449.1" y="274.5" width="1.5" height="1.5" fill="#252423"/>
<rect x="2451.6" y="274.5" width="1.5" height="1.5" fill="#252423"/>
<rect x="2446.6" y="277.0" width="1.5" height="1.5" fill="#252423"/>
<rect x="2449.1" y="277.0" width="1.5" height="1.5" fill="#252423"/>
<rect x="2451.6" y="277.0" width="1.5" height="1.5" fill="#252423"/>
<text x="2462.4" y="278.6" font-family='"Liberation Sans", sans-serif' font-size="11.8" fill="#252423" textLength="91.5" lengthAdjust="spacingAndGlyphs">Average Annual...</text>
<rect x="2424.5" y="292.5" width="11" height="11" fill="#f7f6f5" stroke="#8a8886" stroke-width="1" rx="1"/>
<path d="M2454.5 292.5 H2445.5 L2450 298 L2445.5 303.5 H2454.5" fill="none" stroke="#252423" stroke-width="1.1"/>
<text x="2462.4" y="302.6" font-family='"Liberation Sans", sans-serif' font-size="11.8" fill="#252423" textLength="30.5" lengthAdjust="spacingAndGlyphs">cases</text>
<rect x="2424.5" y="316.5" width="11" height="11" fill="#f7f6f5" stroke="#8a8886" stroke-width="1" rx="1"/>
<text x="2462.4" y="326.6" font-family='"Liberation Sans", sans-serif' font-size="11.8" fill="#252423" textLength="36.5" lengthAdjust="spacingAndGlyphs">disease</text>
<rect x="2424.5" y="340.5" width="11" height="11" fill="#f7f6f5" stroke="#8a8886" stroke-width="1" rx="1"/>
<rect x="2444.5" y="339.7" width="11" height="12.8" fill="none" stroke="#252423" stroke-width="1.1" rx="2"/>
<rect x="2446.8" y="341.8" width="6.4" height="2.4" fill="none" stroke="#252423" stroke-width="0.8"/>
<rect x="2446.6" y="346.5" width="1.5" height="1.5" fill="#252423"/>
<rect x="2449.1" y="346.5" width="1.5" height="1.5" fill="#252423"/>
<rect x="2451.6" y="346.5" width="1.5" height="1.5" fill="#252423"/>
<rect x="2446.6" y="349.0" width="1.5" height="1.5" fill="#252423"/>
<rect x="2449.1" y="349.0" width="1.5" height="1.5" fill="#252423"/>
<rect x="2451.6" y="349.0" width="1.5" height="1.5" fill="#252423"/>
<text x="2462.4" y="350.6" font-family='"Liberation Sans", sans-serif' font-size="11.8" fill="#252423" textLength="89.5" lengthAdjust="spacingAndGlyphs">Distinct Diseases</text>
<rect x="2424.5" y="364.5" width="11" height="11" fill="#f7f6f5" stroke="#8a8886" stroke-width="1" rx="1"/>
<path d="M2411.5 365.5 L2416 370 L2411.5 374.5" fill="none" stroke="#605e5c" stroke-width="1"/>
<rect x="2444.5" y="365" width="11" height="10.5" fill="none" stroke="#252423" stroke-width="1.1" rx="2"/>
<line x1="2444.5" y1="368" x2="2455.5" y2="368" stroke="#252423" stroke-width="1"/>
<rect x="2446.6" y="371" width="1.4" height="1.4" fill="#252423"/>
<rect x="2449.1" y="371" width="1.4" height="1.4" fill="#252423"/>
<rect x="2451.6" y="371" width="1.4" height="1.4" fill="#252423"/>
<text x="2462.4" y="374.6" font-family='"Liberation Sans", sans-serif' font-size="11.8" fill="#252423" textLength="77.5" lengthAdjust="spacingAndGlyphs">first_day_week</text>
<rect x="2424.5" y="388.5" width="11" height="11" fill="#f7f6f5" stroke="#8a8886" stroke-width="1" rx="1"/>
<path d="M2411.5 389.5 L2416 394 L2411.5 398.5" fill="none" stroke="#605e5c" stroke-width="1"/>
<rect x="2444.5" y="389" width="11" height="10.5" fill="none" stroke="#252423" stroke-width="1.1" rx="2"/>
<line x1="2444.5" y1="392" x2="2455.5" y2="392" stroke="#252423" stroke-width="1"/>
<rect x="2446.6" y="395" width="1.4" height="1.4" fill="#252423"/>
<rect x="2449.1" y="395" width="1.4" height="1.4" fill="#252423"/>
<rect x="2451.6" y="395" width="1.4" height="1.4" fill="#252423"/>
<text x="2462.4" y="398.6" font-family='"Liberation Sans", sans-serif' font-size="11.8" fill="#252423" textLength="75.0" lengthAdjust="spacingAndGlyphs">last_day_week</text>
<rect x="2424.5" y="412.5" width="11" height="11" fill="#f7f6f5" stroke="#8a8886" stroke-width="1" rx="1"/>
<rect x="2444.5" y="411.7" width="11" height="12.8" fill="none" stroke="#252423" stroke-width="1.1" rx="2"/>
<rect x="2446.8" y="413.8" width="6.4" height="2.4" fill="none" stroke="#252423" stroke-width="0.8"/>
<rect x="2446.6" y="418.5" width="1.5" height="1.5" fill="#252423"/>
<rect x="2449.1" y="418.5" width="1.5" height="1.5" fill="#252423"/>
<rect x="2451.6" y="418.5" width="1.5" height="1.5" fill="#252423"/>
<rect x="2446.6" y="421.0" width="1.5" height="1.5" fill="#252423"/>
<rect x="2449.1" y="421.0" width="1.5" height="1.5" fill="#252423"/>
<rect x="2451.6" y="421.0" width="1.5" height="1.5" fill="#252423"/>
<text x="2462.4" y="422.6" font-family='"Liberation Sans", sans-serif' font-size="11.8" fill="#252423" textLength="89.5" lengthAdjust="spacingAndGlyphs">Max Weekly Ca...</text>
<rect x="2424.5" y="436.5" width="11" height="11" fill="#f7f6f5" stroke="#8a8886" stroke-width="1" rx="1"/>
<path d="M2454.5 436.5 H2445.5 L2450 442 L2445.5 447.5 H2454.5" fill="none" stroke="#252423" stroke-width="1.1"/>
<text x="2462.4" y="446.6" font-family='"Liberation Sans", sans-serif' font-size="11.8" fill="#252423" textLength="64.5" lengthAdjust="spacingAndGlyphs">mmwr_week</text>
<rect x="2424.5" y="460.5" width="11" height="11" fill="#f7f6f5" stroke="#8a8886" stroke-width="1" rx="1"/>
<path d="M2454.5 460.5 H2445.5 L2450 466 L2445.5 471.5 H2454.5" fill="none" stroke="#252423" stroke-width="1.1"/>
<text x="2462.4" y="470.6" font-family='"Liberation Sans", sans-serif' font-size="11.8" fill="#252423" textLength="61.0" lengthAdjust="spacingAndGlyphs">mmwr_year</text>
<rect x="2424.5" y="484.5" width="11" height="11" fill="#f7f6f5" stroke="#8a8886" stroke-width="1" rx="1"/>
<path d="M2454.5 484.5 H2445.5 L2450 490 L2445.5 495.5 H2454.5" fill="none" stroke="#252423" stroke-width="1.1"/>
<text x="2462.4" y="494.6" font-family='"Liberation Sans", sans-serif' font-size="11.8" fill="#252423" textLength="34.5" lengthAdjust="spacingAndGlyphs">row_id</text>
<rect x="2424.5" y="508.5" width="11" height="11" fill="#f7f6f5" stroke="#8a8886" stroke-width="1" rx="1"/>
<rect x="2444.5" y="507.7" width="11" height="12.8" fill="none" stroke="#252423" stroke-width="1.1" rx="2"/>
<rect x="2446.8" y="509.8" width="6.4" height="2.4" fill="none" stroke="#252423" stroke-width="0.8"/>
<rect x="2446.6" y="514.5" width="1.5" height="1.5" fill="#252423"/>
<rect x="2449.1" y="514.5" width="1.5" height="1.5" fill="#252423"/>
<rect x="2451.6" y="514.5" width="1.5" height="1.5" fill="#252423"/>
<rect x="2446.6" y="517.0" width="1.5" height="1.5" fill="#252423"/>
<rect x="2449.1" y="517.0" width="1.5" height="1.5" fill="#252423"/>
<rect x="2451.6" y="517.0" width="1.5" height="1.5" fill="#252423"/>
<text x="2462.4" y="518.6" font-family='"Liberation Sans", sans-serif' font-size="11.8" fill="#252423" textLength="91.5" lengthAdjust="spacingAndGlyphs">Total Cases This...</text>
<rect x="2424.5" y="532.5" width="11" height="11" fill="#f7f6f5" stroke="#8a8886" stroke-width="1" rx="1"/>
<rect x="2444.5" y="531.7" width="11" height="12.8" fill="none" stroke="#252423" stroke-width="1.1" rx="2"/>
<rect x="2446.8" y="533.8" width="6.4" height="2.4" fill="none" stroke="#252423" stroke-width="0.8"/>
<rect x="2446.6" y="538.5" width="1.5" height="1.5" fill="#252423"/>
<rect x="2449.1" y="538.5" width="1.5" height="1.5" fill="#252423"/>
<rect x="2451.6" y="538.5" width="1.5" height="1.5" fill="#252423"/>
<rect x="2446.6" y="541.0" width="1.5" height="1.5" fill="#252423"/>
<rect x="2449.1" y="541.0" width="1.5" height="1.5" fill="#252423"/>
<rect x="2451.6" y="541.0" width="1.5" height="1.5" fill="#252423"/>
<text x="2462.4" y="542.6" font-family='"Liberation Sans", sans-serif' font-size="11.8" fill="#252423" textLength="61.0" lengthAdjust="spacingAndGlyphs">Total_Cases</text>
</svg>
</body></html>
